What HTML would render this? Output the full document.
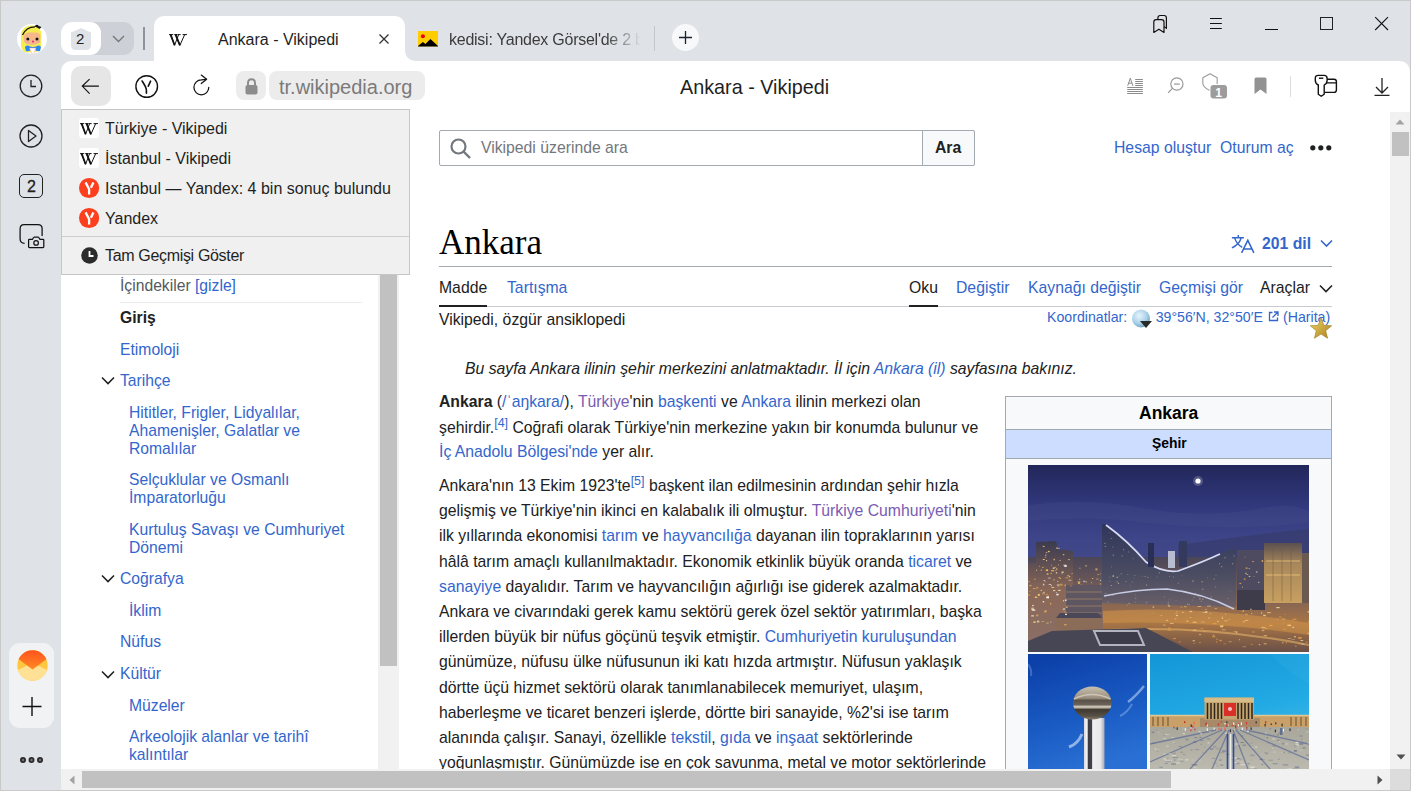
<!DOCTYPE html>
<html><head><meta charset="utf-8">
<style>
*{box-sizing:border-box;margin:0;padding:0}
html,body{width:1411px;height:791px;overflow:hidden;background:#dfe2e7;font-family:"Liberation Sans",sans-serif}
.a{position:absolute}
.t{position:absolute;white-space:nowrap;line-height:1}
#frame{position:absolute;left:0;top:0;width:1411px;height:791px;border:1px solid #c9c9c9;pointer-events:none;z-index:50}
svg{position:absolute;overflow:visible}
.wp{font-size:15.76px;color:#202122}
.ui{color:#1f1f1f}
.lk{color:#3366cc}
.vs{color:#795cb2}
</style></head><body>
<div id="frame"></div>

<!-- ===== TAB STRIP ===== -->
<!-- avatar -->
<div class="a" style="left:17px;top:24px;width:30px;height:30px;border-radius:50%;background:#fff;overflow:hidden">
 <svg width="30" height="30" style="left:0;top:0">
  <path d="M4 14 Q3 2 15 1.5 Q25 2 24.5 13 L24 24 Q22 28 18 28 L8 28.5 Q4 26 4 20Z" fill="#f4ec50"/>
  <path d="M6.5 13 Q7 8.5 12 8.5 L20 8.5 Q23.5 9 23.3 13 L23 17 Q21 21 15 21 Q8.5 21 7 17Z" fill="#f6b88a"/>
  <path d="M6 12 Q9 4 16 3.5 Q21 4 23.5 10 Q18 6.5 12 7.5 Q8 8.5 6 12Z" fill="#f4ec50"/>
  <path d="M5.5 11 Q9 3 18 2.8" stroke="#151515" stroke-width="1.3" fill="none"/>
  <path d="M18 2.5 L20.5 0.8 L21.5 3 L24 2.8 L22 4.5" stroke="#151515" stroke-width="1.3" fill="#151515"/>
  <circle cx="10.8" cy="15" r="1.5" fill="#111"/><circle cx="20" cy="15" r="1.5" fill="#111"/>
  <circle cx="9.5" cy="17.5" r="1.6" fill="#f59ab0" opacity="0.7"/><circle cx="21.5" cy="17.5" r="1.6" fill="#f59ab0" opacity="0.7"/>
  <circle cx="16" cy="17.6" r="1.1" fill="#e8357a"/>
  <path d="M8 23 Q10 20.5 13 22.5 L16 23 L19 22.5 Q22 20.5 24 23 L23 27 Q20 28 17 25 L15 25 Q12 28 9 27Z" fill="#2b86f2"/>
  <path d="M12.5 24 L19 24 L16.5 30 L15 30Z" fill="#fff" stroke="#f0a080" stroke-width="0.5"/>
 </svg>
</div>
<!-- tab group pill -->
<div class="a" style="left:61px;top:22px;width:73px;height:33px;border-radius:11px;background:#cdd0d6"></div>
<div class="a" style="left:61px;top:22px;width:40px;height:33px;border-radius:11px;background:#fff"></div>
<svg class="a" style="left:70px;top:27px" width="22" height="24"><path d="M11 1 L21 5.5 L21 18 Q21 23 16 23 L6 23 Q1 23 1 18 L1 5.5 Z" fill="#dfe2e7"/></svg>
<div class="t" style="left:76px;top:31px;font-size:15px;color:#222">2</div>
<svg class="a" style="left:112px;top:35px" width="13" height="8"><path d="M1 1 L6.5 6.5 L12 1" stroke="#777" stroke-width="1.4" fill="none"/></svg>
<div class="a" style="left:143px;top:27px;width:2px;height:23px;background:#8f949b"></div>

<!-- active tab -->
<div class="a" style="left:154px;top:16px;width:251px;height:50px;border-radius:10px 10px 0 0;background:#fff"></div>
<div class="a" style="left:405px;top:51px;width:10px;height:10px;background:#fff"></div>
<div class="a" style="left:405px;top:41px;width:20px;height:20px;border-radius:0 0 0 10px;background:#dfe2e7"></div>
<svg class="a" style="left:169px;top:34px" width="18" height="11.6" viewBox="0 0 18 11.6"><path d="M1.6 0.6 L5.6 11.3 M5.6 11.3 L9.6 0.6 M6.6 0.6 L10.9 11.3 M10.9 11.3 L15.7 0.6" stroke="#111" fill="none" stroke-width="1"/><path d="M1.6 0.6 L5.6 11.3 M6.6 0.6 L10.9 11.3" stroke="#111" fill="none" stroke-width="1.8"/><path d="M0 0.6 H4.2 M5.2 0.6 H8.2 M8.4 0.6 H11.6 M13.6 0.6 H18" stroke="#111" stroke-width="1"/></svg>
<div class="t ui" style="left:218px;top:32px;font-size:16px">Ankara - Vikipedi</div>
<svg class="a" style="left:379px;top:34px" width="10" height="10"><path d="M0.5 0.5 L9.5 9.5 M9.5 0.5 L0.5 9.5" stroke="#333" stroke-width="1.3"/></svg>

<!-- second tab -->
<svg class="a" style="left:418px;top:31px" width="20" height="16"><rect width="20" height="15.4" fill="#ffcc00"/><path d="M0 15 L4.9 10.9 L7.4 12.9 L12.4 8 L20 15 L20 15.4 L0 15.4Z" fill="#000"/><circle cx="4.9" cy="5.3" r="2" fill="#e8000c"/></svg>
<div class="t" style="left:449px;top:32px;font-size:16px;color:#3c3c3c;width:196px;overflow:hidden;letter-spacing:-0.25px;-webkit-mask-image:linear-gradient(90deg,#000 80%,transparent 98%)">kedisi: Yandex Görsel'de 2 bin</div>
<div class="a" style="left:654px;top:26px;width:1px;height:25px;background:#c3c7cd"></div>
<div class="a" style="left:672px;top:24px;width:27px;height:27px;border-radius:50%;background:#f7f8f9"></div>
<svg class="a" style="left:679px;top:31px" width="13" height="13"><path d="M6.5 0 V13 M0 6.5 H13" stroke="#1a2230" stroke-width="1.3"/></svg>

<!-- right chrome icons -->
<svg class="a" style="left:1152px;top:14px" width="18" height="20"><path d="M5.9 5.7 V3.8 Q5.9 1.5 8.2 1.5 H12.1 Q14.4 1.5 14.4 3.8 V14.2 L12.1 12.8" stroke="#111" stroke-width="1.2" fill="none"/><path d="M1.8 18.4 V8 Q1.8 5.7 4.1 5.7 H9.7 Q12 5.7 12 8 V18.4 L6.9 15.2 Z" stroke="#111" stroke-width="1.2" fill="none" stroke-linejoin="round"/></svg>
<svg class="a" style="left:1209px;top:17px" width="14" height="13"><path d="M1 1.5 H12.8 M1 6.5 H12.8 M1 11.5 H12.8" stroke="#111" stroke-width="1.1"/></svg>
<div class="a" style="left:1265px;top:29px;width:13px;height:1px;background:#111"></div>
<div class="a" style="left:1320px;top:17px;width:13px;height:13px;border:1.3px solid #222"></div>
<svg class="a" style="left:1375px;top:17px" width="14" height="14"><path d="M0.2 0.2 L13 13 M13 0.2 L0.2 13" stroke="#111" stroke-width="1.1"/></svg>

<!-- ===== LEFT SIDEBAR ===== -->
<svg class="a" style="left:19px;top:74px" width="24" height="24"><circle cx="12" cy="12" r="10.8" stroke="#222" stroke-width="1.3" fill="none"/><path d="M12 6 V12.5 H17" stroke="#222" stroke-width="1.3" fill="none"/></svg>
<svg class="a" style="left:19px;top:124px" width="24" height="24"><circle cx="12" cy="12" r="11" stroke="#222" stroke-width="1.3" fill="none"/><path d="M9.5 6.5 L17 12 L9.5 17.5 Z" stroke="#222" stroke-width="1.3" fill="none" stroke-linejoin="round"/></svg>
<div class="a" style="left:19px;top:174px;width:24px;height:24px;border:1.3px solid #222;border-radius:5px"></div>
<div class="t" style="left:27px;top:179px;font-size:16px;color:#222;-webkit-text-stroke:0.3px #222">2</div>
<svg class="a" style="left:19px;top:224px" width="26" height="25"><path d="M5.6 19.3 Q1.1 19.3 1.1 14.8 V5 Q1.1 0.6 5 0.6 H19 Q23.1 0.6 23.1 4.6 V12" stroke="#111" stroke-width="1.25" fill="none"/><path d="M10.4 15.3 Q9.6 15.3 9.6 16.1 V22.8 Q9.6 23.6 10.4 23.6 H24 Q24.8 23.6 24.8 22.8 V16.1 Q24.8 15.3 24 15.3 H21 L19.8 13.5 Q19.5 13 19 13 H15.4 Q14.9 13 14.6 13.5 L13.4 15.3 Z" stroke="#111" stroke-width="1.25" fill="none" stroke-linejoin="round"/><circle cx="17.1" cy="18.9" r="2.3" stroke="#111" stroke-width="1.2" fill="none"/></svg>

<div class="a" style="left:9px;top:643px;width:45px;height:85px;border-radius:11px;background:#f1f2f4"></div>
<svg class="a" style="left:17px;top:650px" width="31" height="31"><defs><linearGradient id="mg" x1="0" y1="0" x2="0" y2="1"><stop offset="0" stop-color="#ff4d1c"/><stop offset="1" stop-color="#ff8a24"/></linearGradient><clipPath id="mc"><circle cx="15.5" cy="15.5" r="15.2"/></clipPath></defs><g clip-path="url(#mc)"><rect width="31" height="31" fill="#ffc640"/><path d="M-2 21.5 L15.5 12.8 L33 21.5 L33 33 L-2 33Z" fill="#ffe196"/><path d="M-2 6.5 L15.5 19.5 L33 6.5 L33 -2 L-2 -2Z" fill="url(#mg)"/></g></svg>
<svg class="a" style="left:22px;top:697px" width="20" height="20"><path d="M10 0 V19 M0.5 9.5 H19.5" stroke="#111" stroke-width="1.4"/></svg>
<svg class="a" style="left:20px;top:757px" width="23" height="6"><circle cx="3" cy="3" r="2.1" stroke="#2a2a2a" stroke-width="1.8" fill="#777"/><circle cx="11.5" cy="3" r="2.1" stroke="#2a2a2a" stroke-width="1.8" fill="#777"/><circle cx="20" cy="3" r="2.1" stroke="#2a2a2a" stroke-width="1.8" fill="#777"/></svg>

<!-- ===== TOOLBAR ===== -->
<div class="a" style="left:61px;top:61px;width:1349px;height:51px;background:#fff;border-radius:10px 10px 0 0"></div>
<div class="a" style="left:154px;top:55px;width:251px;height:10px;background:#fff"></div>
<div class="a" style="left:71px;top:66px;width:40px;height:40px;border-radius:10px;background:#e6e6e6"></div>
<svg class="a" style="left:81px;top:79px" width="19" height="16"><path d="M17.9 7.1 H1.3 M8.6 0.1 L1.3 7.1 L8.6 14.7" stroke="#111" stroke-width="1.15" fill="none"/></svg>
<svg class="a" style="left:135px;top:75px" width="24" height="24"><circle cx="11.7" cy="11.5" r="10.8" stroke="#111" stroke-width="1.4" fill="none"/><path d="M7.1 6 Q11.4 12.5 11.4 15 V18.2 M15.6 6.2 L13.3 11.2" stroke="#111" stroke-width="1.6" fill="none" stroke-linecap="round"/></svg>
<svg class="a" style="left:192px;top:74px" width="19" height="22"><path d="M16.8 13.35 A7.45 7.45 0 1 1 9.35 5.9 L14.4 5.4" stroke="#111" stroke-width="1.25" fill="none" stroke-linecap="round"/><path d="M9.3 1.1 L14.6 5.3 L9.3 9.5" stroke="#111" stroke-width="1.25" fill="none" stroke-linecap="round" stroke-linejoin="round"/></svg>
<div class="a" style="left:236px;top:71px;width:30px;height:29px;border-radius:8px;background:#ececec"></div>
<svg class="a" style="left:245px;top:78px" width="13" height="17"><path d="M3 7.5 V5 Q3 1.3 6.5 1.3 Q10 1.3 10 5 V7.5" stroke="#8c8c8c" stroke-width="2" fill="none"/><rect x="0.5" y="7" width="12" height="9.5" rx="2" fill="#8c8c8c"/></svg>
<div class="a" style="left:269px;top:71px;width:156px;height:29px;border-radius:8px;background:#ececec"></div>
<div class="t" style="left:279px;top:77px;font-size:20px;color:#7a7a7a">tr.wikipedia.org</div>
<div class="t" style="left:680px;top:78px;font-size:19.8px;color:#1f1f1f">Ankara - Vikipedi</div>

<!-- right toolbar icons -->
<svg class="a" style="left:1127px;top:77px" width="17" height="18"><path d="M0.7 8.8 L3.3 1.2 L5.9 8.8 M1.7 6.2 H4.9" stroke="#8c8c8c" stroke-width="1" fill="none"/><path d="M8.2 2.5 H15.9 M8.2 4.5 H15.9 M8.2 6.5 H15.9 M8.2 8.5 H15.9 M0.2 10.5 H15.9 M0.2 12.5 H15.9 M0.2 14.5 H15.9 M0.2 16.5 H15.9" stroke="#8c8c8c" stroke-width="1"/></svg>
<svg class="a" style="left:1167px;top:77px" width="18" height="17"><circle cx="9.9" cy="7" r="6.1" stroke="#999" stroke-width="1.2" fill="none"/><path d="M7 7.1 H12.8" stroke="#999" stroke-width="1.2"/><path d="M5.4 11.3 L1.1 15.9" stroke="#999" stroke-width="1.2"/></svg>
<svg class="a" style="left:1201px;top:73px" width="28" height="27"><path d="M9 0.7 L16.2 4.8 V10 Q16.2 14.5 9 17.5 Q1.8 14.5 1.8 10 V4.8 Z" stroke="#9a9a9a" stroke-width="1.1" fill="none" stroke-linejoin="round"/><rect x="8.5" y="11" width="18" height="15" rx="3.5" fill="#fff"/><rect x="9.5" y="12" width="16.5" height="13.5" rx="3" fill="#9c9c9c"/><text x="14.3" y="23.6" font-family="Liberation Sans" font-weight="700" font-size="12" fill="#fff">1</text></svg>
<svg class="a" style="left:1254px;top:77px" width="13" height="18"><path d="M0.5 2 Q0.5 0.5 2 0.5 H11 Q12.5 0.5 12.5 2 V17 L6.5 12.5 L0.5 17Z" fill="#929292"/></svg>
<div class="a" style="left:1290px;top:76px;width:1px;height:21px;background:#dcdcdc"></div>
<svg class="a" style="left:1314px;top:74px" width="24" height="24"><path d="M10.5 5.2 H20 Q22.4 5.2 22.4 7.6 V16 Q22.4 18.4 20 18.4 H10.5 M10.5 8.9 H22.4" stroke="#111" stroke-width="1.4" fill="none"/><path d="M1.3 4.2 Q1.3 1.4 4.3 1.4 H10 Q13.1 1.4 13.1 4.2 V6.5 Q13.1 9.5 10.2 11 V20.2 L7.2 22.3 L4.3 20.2 V11 Q1.3 9.5 1.3 6.5 Z" stroke="#111" stroke-width="1.4" fill="#fff" stroke-linejoin="round"/><path d="M4.9 4.2 H9.3" stroke="#111" stroke-width="1.4"/></svg>
<svg class="a" style="left:1374px;top:77px" width="16" height="19"><path d="M8 1 V16 M2 10 L8 16 L14 10 M0.5 18.3 H15.5" stroke="#222" stroke-width="1.3" fill="none"/></svg>

<!-- ===== PAGE ===== -->
<div class="a" style="left:61px;top:112px;width:1349px;height:678px;background:#fff"></div>

<!-- TOC -->
<div class="t wp" style="left:120px;top:278px;color:#54595d;font-size:15.7px">İçindekiler <span class="lk">[gizle]</span></div>
<div class="a" style="left:120px;top:302px;width:242px;height:1px;background:#eaecf0"></div>
<div class="t wp" style="left:120px;top:310px;font-weight:700;font-size:15.7px;color:#202122">Giriş</div>
<div class="t wp lk" style="left:120px;top:342px;font-size:15.7px">Etimoloji</div>
<div class="t wp lk" style="left:120px;top:373px;font-size:15.7px">Tarihçe</div>
<div class="a wp lk" style="left:129px;top:404px;font-size:15.7px;line-height:17.75px;white-space:nowrap">Hititler, Frigler, Lidyalılar,<br>Ahamenişler, Galatlar ve<br>Romalılar</div>
<div class="a wp lk" style="left:129px;top:471px;font-size:15.7px;line-height:17.75px;white-space:nowrap">Selçuklular ve Osmanlı<br>İmparatorluğu</div>
<div class="a wp lk" style="left:129px;top:521px;font-size:15.7px;line-height:17.75px;white-space:nowrap">Kurtuluş Savaşı ve Cumhuriyet<br>Dönemi</div>
<div class="t wp lk" style="left:120px;top:571px;font-size:15.7px">Coğrafya</div>
<div class="t wp lk" style="left:129px;top:603px;font-size:15.7px">İklim</div>
<div class="t wp lk" style="left:120px;top:634px;font-size:15.7px">Nüfus</div>
<div class="t wp lk" style="left:120px;top:666px;font-size:15.7px">Kültür</div>
<div class="t wp lk" style="left:129px;top:698px;font-size:15.7px">Müzeler</div>
<div class="a wp lk" style="left:129px;top:728px;font-size:15.7px;line-height:17.75px;white-space:nowrap">Arkeolojik alanlar ve tarihî<br>kalıntılar</div>
<svg class="a" style="left:101px;top:376px" width="14" height="10"><path d="M1 1.5 L7 7.5 L13 1.5" stroke="#202122" stroke-width="1.6" fill="none"/></svg>
<svg class="a" style="left:101px;top:574px" width="14" height="10"><path d="M1 1.5 L7 7.5 L13 1.5" stroke="#202122" stroke-width="1.6" fill="none"/></svg>
<svg class="a" style="left:101px;top:670px" width="14" height="10"><path d="M1 1.5 L7 7.5 L13 1.5" stroke="#202122" stroke-width="1.6" fill="none"/></svg>
<!-- TOC scrollbar -->
<div class="a" style="left:378px;top:112px;width:21px;height:657px;background:#f1f1f1"></div>
<div class="a" style="left:380px;top:112px;width:17px;height:554px;background:#c1c1c1"></div>

<!-- search -->
<div class="a" style="left:439px;top:130px;width:536px;height:36px;border:1px solid #a2a9b1;border-radius:2px;background:#fff"></div>
<div class="a" style="left:922px;top:130px;width:53px;height:36px;border:1px solid #a2a9b1;border-radius:0 2px 2px 0;background:#f8f9fa"></div>
<svg class="a" style="left:450px;top:138px" width="22" height="22"><circle cx="8.5" cy="8.5" r="7" stroke="#72777d" stroke-width="2.2" fill="none"/><path d="M13.5 13.5 L20 20" stroke="#72777d" stroke-width="2.4"/></svg>
<div class="t wp" style="left:481px;top:140px;color:#72777d">Vikipedi üzerinde ara</div>
<div class="t wp" style="left:935px;top:140px;font-weight:700;color:#202122">Ara</div>
<div class="t wp lk" style="left:1114px;top:140px">Hesap oluştur</div>
<div class="t wp lk" style="left:1220px;top:140px">Oturum aç</div>
<svg class="a" style="left:1310px;top:145px" width="22" height="6"><circle cx="2.8" cy="2.8" r="2.6" fill="#202122"/><circle cx="10.8" cy="2.8" r="2.6" fill="#202122"/><circle cx="18.8" cy="2.8" r="2.6" fill="#202122"/></svg>

<!-- heading -->
<div class="t" style="left:439px;top:225px;font-family:'Liberation Serif',serif;font-size:35px;color:#000">Ankara</div>
<div class="a" style="left:439px;top:266px;width:893px;height:1px;background:#a2a9b1"></div>
<svg class="a" style="left:1231px;top:234px" width="24" height="20"><path d="M7.3 1 V3.4 M0.9 3.7 H12.9 M3.6 3.9 Q5.6 10.2 11.2 13.4 M10.2 3.9 Q8 10.6 0.9 13.8" stroke="#3366cc" stroke-width="1.45" fill="none"/><path d="M10.6 18.9 L16.8 6.3 L22.9 18.9 M12.6 14.9 H21" stroke="#3366cc" stroke-width="1.5" fill="none"/></svg>
<div class="t wp lk" style="left:1262px;top:236px;font-weight:700">201 dil</div>
<svg class="a" style="left:1320px;top:239px" width="13" height="9"><path d="M1 1.5 L6.5 7 L12 1.5" stroke="#3366cc" stroke-width="1.6" fill="none"/></svg>

<!-- tabs -->
<div class="t wp" style="left:439px;top:280px">Madde</div>
<div class="t wp lk" style="left:507px;top:280px">Tartışma</div>
<div class="t wp" style="left:909px;top:280px">Oku</div>
<div class="t wp lk" style="left:956px;top:280px">Değiştir</div>
<div class="t wp lk" style="left:1028px;top:280px">Kaynağı değiştir</div>
<div class="t wp lk" style="left:1159px;top:280px">Geçmişi gör</div>
<div class="t wp" style="left:1260px;top:280px">Araçlar</div>
<svg class="a" style="left:1319px;top:284px" width="14" height="9"><path d="M1 1.5 L7 7.5 L13 1.5" stroke="#202122" stroke-width="1.6" fill="none"/></svg>
<div class="a" style="left:439px;top:306px;width:893px;height:1px;background:#c8ccd1"></div>
<div class="a" style="left:439px;top:305px;width:48px;height:2px;background:#202122"></div>
<div class="a" style="left:909px;top:305px;width:29px;height:2px;background:#202122"></div>
<div class="t wp" style="left:439px;top:312px">Vikipedi, özgür ansiklopedi</div>

<!-- coordinates -->
<div class="t lk" style="left:1047px;top:310px;font-size:14.16px">Koordinatlar:</div>
<svg class="a" style="left:1131px;top:309px" width="22" height="20"><defs><radialGradient id="gl" cx="0.4" cy="0.35" r="0.7"><stop offset="0" stop-color="#e8f4fb"/><stop offset="0.6" stop-color="#a9d2ea"/><stop offset="1" stop-color="#6a9dbd"/></radialGradient></defs><circle cx="10" cy="9.5" r="9" fill="url(#gl)"/><path d="M9 12 H21 L15 19Z" fill="#2a2a2a"/></svg>
<div class="t lk" style="left:1155.7px;top:310px;font-size:14.16px">39°56′N, 32°50′E</div>
<svg class="a" style="left:1268px;top:311px" width="11" height="11"><path d="M4.5 1.5 H1.5 V9.5 H9.5 V6.5 M6 1 H10 V5 M10 1 L4.5 6.5" stroke="#3366cc" stroke-width="1.3" fill="none"/></svg>
<div class="t lk" style="left:1283px;top:310px;font-size:14.16px">(Harita)</div>
<svg class="a" style="left:1309px;top:317px" width="24" height="22"><defs><linearGradient id="st" x1="0" y1="0" x2="1" y2="1"><stop offset="0" stop-color="#f3d56a"/><stop offset="1" stop-color="#a6801d"/></linearGradient></defs><path d="M12 1 L14.9 8.3 L22.7 8.8 L16.7 13.7 L18.6 21.3 L12 17.1 L5.4 21.3 L7.3 13.7 L1.3 8.8 L9.1 8.3Z" fill="url(#st)" stroke="#9a7a20" stroke-width="0.6"/></svg>

<!-- hatnote -->
<div class="t wp" style="left:465px;top:361px;font-style:italic">Bu sayfa Ankara ilinin şehir merkezini anlatmaktadır. İl için <span class="lk">Ankara (il)</span> sayfasına bakınız.</div>

<!-- paragraphs -->
<div class="t wp" style="left:439px;top:394px"><b>Ankara</b> (<span class="lk">/ˈaŋkara/</span>), <span class="vs">Türkiye</span>'nin <span class="lk">başkenti</span> ve <span class="lk">Ankara</span> ilinin merkezi olan</div>
<div class="t wp" style="left:439px;top:420px">şehirdir.<sup class="lk" style="font-size:12.5px;line-height:0">[4]</sup> Coğrafi olarak Türkiye'nin merkezine yakın bir konumda bulunur ve</div>
<div class="t wp" style="left:439px;top:444px"><span class="lk">İç Anadolu Bölgesi'nde</span> yer alır.</div>
<div class="a wp" style="left:439px;top:473px;line-height:25.2px;white-space:nowrap">Ankara'nın 13 Ekim 1923'te<sup class="lk" style="font-size:12.5px;line-height:0">[5]</sup> başkent ilan edilmesinin ardından şehir hızla<br>gelişmiş ve Türkiye'nin ikinci en kalabalık ili olmuştur. <span class="vs">Türkiye Cumhuriyeti</span>'nin<br>ilk yıllarında ekonomisi <span class="lk">tarım</span> ve <span class="lk">hayvancılığa</span> dayanan ilin topraklarının yarısı<br>hâlâ tarım amaçlı kullanılmaktadır. Ekonomik etkinlik büyük oranda <span class="lk">ticaret</span> ve<br><span class="lk">sanayiye</span> dayalıdır. Tarım ve hayvancılığın ağırlığı ise giderek azalmaktadır.<br>Ankara ve civarındaki gerek kamu sektörü gerek özel sektör yatırımları, başka<br>illerden büyük bir nüfus göçünü teşvik etmiştir. <span class="lk">Cumhuriyetin kuruluşundan</span><br>günümüze, nüfusu ülke nüfusunun iki katı hızda artmıştır. Nüfusun yaklaşık<br>dörtte üçü hizmet sektörü olarak tanımlanabilecek memuriyet, ulaşım,<br>haberleşme ve ticaret benzeri işlerde, dörtte biri sanayide, %2'si ise tarım<br>alanında çalışır. Sanayi, özellikle <span class="lk">tekstil</span>, <span class="lk">gıda</span> ve <span class="lk">inşaat</span> sektörlerinde<br>yoğunlaşmıştır. Günümüzde ise en çok savunma, metal ve motor sektörlerinde</div>

<!-- infobox -->
<div class="a" style="left:1005px;top:396px;width:327px;height:400px;border:1px solid #a2a9b1;background:#f8f9fa"></div>
<div class="a" style="left:1006px;top:429px;width:325px;height:1px;background:#a2a9b1"></div>
<div class="a" style="left:1006px;top:430px;width:325px;height:28px;background:#ccddff"></div>
<div class="a" style="left:1006px;top:458px;width:325px;height:1px;background:#a2a9b1"></div>
<div class="t" style="left:1139px;top:405px;font-size:17.5px;font-weight:700;color:#000">Ankara</div>
<div class="t" style="left:1152px;top:437px;font-size:13.9px;font-weight:700;color:#000">Şehir</div>
<div class="a" style="left:1028px;top:465px;width:281px;height:187px;overflow:hidden"><svg class="a" style="left:0;top:0" width="281" height="187" viewBox="0 0 281 187">
 <defs>
  <linearGradient id="sky1" x1="0" y1="0" x2="0" y2="1"><stop offset="0" stop-color="#22275a"/><stop offset="0.2" stop-color="#30377a"/><stop offset="0.4" stop-color="#3e4588"/><stop offset="0.55" stop-color="#444a88"/></linearGradient>
  <linearGradient id="wave" x1="0" y1="0" x2="0" y2="1"><stop offset="0" stop-color="#30365a"/><stop offset="0.6" stop-color="#4a4c62"/><stop offset="1" stop-color="#6a6068"/></linearGradient>
  <linearGradient id="gold" x1="0" y1="0" x2="0" y2="1"><stop offset="0" stop-color="#5a5050"/><stop offset="0.35" stop-color="#a8875a"/><stop offset="1" stop-color="#c8a060"/></linearGradient>
  <linearGradient id="road" x1="0" y1="0" x2="0" y2="1"><stop offset="0" stop-color="#4a4658"/><stop offset="0.4" stop-color="#7a6058"/><stop offset="0.7" stop-color="#a87545"/><stop offset="1" stop-color="#6a5048"/></linearGradient>
  <linearGradient id="lcity" x1="0" y1="0" x2="0" y2="1"><stop offset="0" stop-color="#3a3a50"/><stop offset="0.45" stop-color="#8a6858"/><stop offset="1" stop-color="#8a7068"/></linearGradient>
 </defs>
 <rect width="281" height="187" fill="url(#sky1)"/>
 <path d="M0 40 Q60 32 120 44 Q180 54 240 42 Q265 38 281 46 L281 58 Q200 66 120 58 Q60 50 0 56Z" fill="#5a5f98" opacity="0.18"/>
 <path d="M150 80 Q220 70 281 64 L281 92 L150 92Z" fill="#363b68" opacity="0.6"/>
 <circle cx="170" cy="16" r="2.6" fill="#fff"/><circle cx="170" cy="16" r="5" fill="#fff" opacity="0.2"/>
 <rect x="0" y="92" width="281" height="95" fill="url(#road)"/>
 <path d="M0 98 L8 98 L8 77 L28 76 L30 84 L45 86 L45 122 L75 124 L75 187 L0 187Z" fill="url(#lcity)"/>
 <path d="M74 59 L78 59 Q100 76 118 97 Q135 108 150 105 Q175 96 201 85 L208 83 L208 142 L74 138Z" fill="url(#wave)"/>
 <path d="M78 60 Q100 76 118 97 Q135 108 150 106 Q175 97 192 89" stroke="#d8dcf4" stroke-width="1.7" fill="none"/>
 <path d="M76 131 Q110 124 139 124 Q175 128 206 144" stroke="#c8cce4" stroke-width="1.5" fill="none"/>
 <rect x="120" y="78" width="6" height="24" fill="#2a3055"/><rect x="140" y="86" width="7" height="17" fill="#b8bcd0"/><rect x="151" y="76" width="8" height="26" fill="#343a5e"/>
 <rect x="209" y="85" width="27" height="42" fill="#4e4a60"/>
 <rect x="209" y="125" width="28" height="20" fill="#3e3c4a"/>
 <rect x="236" y="78" width="38" height="60" fill="url(#gold)"/>
 <path d="M238 96 h34 M238 110 h34" stroke="#f0c878" stroke-width="1.4" opacity="0.55"/>
 <path d="M245 80 v56 M254 80 v56 M263 80 v56" stroke="#6a5a48" stroke-width="0.8" opacity="0.6"/>
 <rect x="274" y="88" width="7" height="50" fill="#6a5a50"/>
 <rect x="38" y="120" width="36" height="34" fill="#5e5660"/>
 <path d="M38 127 h36 M38 134 h36 M38 141 h36 M38 148 h36" stroke="#a88868" stroke-width="1" opacity="0.7"/>
 <rect x="28" y="153" width="46" height="17" fill="#8a6c58"/>
 <path d="M28 153 L74 153 L70 148 L32 148Z" fill="#4a4858"/>
 <path d="M75 146 Q170 140 281 158 L281 170 Q180 155 75 158Z" fill="#d8984a" opacity="0.5"/>
 <path d="M80 165 Q180 160 281 180" stroke="#f4c070" stroke-width="2.2" fill="none" opacity="0.5"/>
 <rect x="20.3" y="86.2" width="1.6" height="0.7" fill="#ffd27a" opacity="0.68"/>
 <rect x="11.0" y="100.8" width="0.8" height="1.0" fill="#ffd27a" opacity="0.62"/>
 <rect x="28.3" y="82.4" width="1.5" height="1.5" fill="#ffd27a" opacity="0.79"/>
 <rect x="22.9" y="120.0" width="0.9" height="1.4" fill="#fff0c0" opacity="0.71"/>
 <rect x="27.9" y="103.4" width="1.5" height="1.2" fill="#ffd27a" opacity="0.79"/>
 <rect x="31.4" y="95.3" width="1.5" height="0.7" fill="#ffd27a" opacity="0.81"/>
 <rect x="26.4" y="101.8" width="1.7" height="1.0" fill="#ffc060" opacity="0.68"/>
 <rect x="17.7" y="87.4" width="1.7" height="0.7" fill="#fff0c0" opacity="0.76"/>
 <rect x="39.6" y="109.9" width="1.1" height="1.5" fill="#ffd27a" opacity="0.76"/>
 <rect x="14.8" y="94.0" width="1.9" height="1.0" fill="#ffd27a" opacity="0.88"/>
 <rect x="29.1" y="115.9" width="1.2" height="1.2" fill="#ffc060" opacity="0.79"/>
 <rect x="25.0" y="114.4" width="1.9" height="1.0" fill="#ffd27a" opacity="0.53"/>
 <rect x="33.6" y="106.5" width="2.0" height="1.3" fill="#fff0c0" opacity="0.86"/>
 <rect x="40.0" y="94.2" width="1.9" height="0.9" fill="#ffd27a" opacity="0.75"/>
 <rect x="16.6" y="91.8" width="1.7" height="1.0" fill="#ffc060" opacity="0.54"/>
 <rect x="24.7" y="102.5" width="1.9" height="1.3" fill="#fff0c0" opacity="0.85"/>
 <rect x="43.5" y="108.0" width="1.3" height="0.8" fill="#ffd27a" opacity="0.59"/>
 <rect x="17.1" y="89.6" width="1.4" height="1.1" fill="#fff0c0" opacity="0.64"/>
 <rect x="14.1" y="101.9" width="1.5" height="0.9" fill="#ffb84a" opacity="0.85"/>
 <rect x="27.0" y="105.3" width="1.6" height="0.6" fill="#ffc060" opacity="0.70"/>
 <rect x="22.8" y="99.7" width="1.3" height="0.8" fill="#ffb84a" opacity="0.72"/>
 <rect x="12.8" y="104.6" width="0.9" height="1.1" fill="#ffd27a" opacity="0.97"/>
 <rect x="30.5" y="82.9" width="1.0" height="0.9" fill="#fff0c0" opacity="0.98"/>
 <rect x="30.1" y="99.4" width="0.9" height="1.0" fill="#ffc060" opacity="0.74"/>
 <rect x="19.9" y="85.9" width="1.7" height="1.3" fill="#ffc060" opacity="0.91"/>
 <rect x="14.7" y="80.9" width="1.9" height="1.1" fill="#ffb84a" opacity="0.85"/>
 <rect x="41.0" y="111.1" width="1.2" height="1.2" fill="#ffd27a" opacity="0.85"/>
 <rect x="18.1" y="95.0" width="1.0" height="1.3" fill="#fff0c0" opacity="0.82"/>
 <rect x="30.5" y="112.3" width="1.7" height="0.8" fill="#ffb84a" opacity="0.91"/>
 <rect x="34.9" y="89.3" width="1.4" height="0.9" fill="#ffd27a" opacity="0.99"/>
 <rect x="36.7" y="99.4" width="1.0" height="1.1" fill="#fff0c0" opacity="0.72"/>
 <rect x="41.8" y="120.5" width="1.9" height="0.9" fill="#ffb84a" opacity="0.55"/>
 <rect x="25.5" y="93.8" width="1.4" height="1.5" fill="#ffd27a" opacity="0.74"/>
 <rect x="31.9" y="112.8" width="0.9" height="1.2" fill="#ffc060" opacity="0.89"/>
 <rect x="35.3" y="99.6" width="1.0" height="1.3" fill="#fff0c0" opacity="0.54"/>
 <rect x="34.3" y="144.6" width="1.0" height="0.8" fill="#ffb84a" opacity="0.51"/>
 <rect x="69.4" y="109.4" width="2.0" height="0.6" fill="#ffd27a" opacity="0.76"/>
 <rect x="15.6" y="115.1" width="1.4" height="0.9" fill="#ffffff" opacity="0.66"/>
 <rect x="4.5" y="144.4" width="2.8" height="1.5" fill="#ffffff" opacity="0.71"/>
 <rect x="1.4" y="126.4" width="1.2" height="0.6" fill="#ffb84a" opacity="0.59"/>
 <rect x="35.0" y="143.5" width="2.0" height="1.1" fill="#ffffff" opacity="0.77"/>
 <rect x="35.7" y="146.6" width="2.7" height="0.7" fill="#ffb84a" opacity="0.64"/>
 <rect x="37.9" y="141.6" width="1.8" height="1.3" fill="#ffc060" opacity="0.75"/>
 <rect x="18.3" y="131.4" width="2.7" height="1.9" fill="#ffffff" opacity="0.95"/>
 <rect x="15.0" y="126.9" width="1.7" height="1.1" fill="#fff0c0" opacity="0.54"/>
 <rect x="17.8" y="104.4" width="2.3" height="1.7" fill="#ffb84a" opacity="0.97"/>
 <rect x="18.7" y="108.2" width="1.8" height="1.6" fill="#ffd27a" opacity="0.70"/>
 <rect x="36.1" y="159.4" width="2.6" height="0.8" fill="#ffc060" opacity="1.00"/>
 <rect x="29.9" y="125.3" width="1.6" height="0.7" fill="#fff0c0" opacity="0.51"/>
 <rect x="1.3" y="119.9" width="2.2" height="1.3" fill="#ffd27a" opacity="0.56"/>
 <rect x="68.0" y="113.7" width="2.7" height="0.7" fill="#fff0c0" opacity="0.52"/>
 <rect x="57.6" y="116.2" width="1.1" height="1.2" fill="#fff0c0" opacity="0.70"/>
 <rect x="36.6" y="119.6" width="1.4" height="1.7" fill="#ffb84a" opacity="0.71"/>
 <rect x="5.4" y="156.3" width="2.2" height="1.7" fill="#ffd27a" opacity="0.80"/>
 <rect x="16.5" y="115.9" width="1.1" height="0.6" fill="#ffffff" opacity="0.71"/>
 <rect x="3.2" y="142.6" width="2.9" height="2.0" fill="#fff0c0" opacity="0.53"/>
 <rect x="14.9" y="118.7" width="1.5" height="1.7" fill="#fff0c0" opacity="0.72"/>
 <rect x="49.7" y="116.2" width="2.6" height="2.0" fill="#ffd27a" opacity="0.51"/>
 <rect x="14.0" y="128.5" width="2.9" height="0.7" fill="#ffc060" opacity="0.83"/>
 <rect x="71.8" y="118.5" width="1.3" height="0.9" fill="#ffb84a" opacity="0.92"/>
 <rect x="29.9" y="120.9" width="0.9" height="0.8" fill="#ffd27a" opacity="0.81"/>
 <rect x="4.1" y="139.9" width="1.6" height="1.3" fill="#fff0c0" opacity="0.80"/>
 <rect x="51.3" y="102.7" width="1.2" height="1.0" fill="#ffd27a" opacity="0.63"/>
 <rect x="40.5" y="114.7" width="2.9" height="1.0" fill="#fff0c0" opacity="0.59"/>
 <rect x="24.8" y="105.0" width="1.4" height="1.5" fill="#ffb84a" opacity="0.75"/>
 <rect x="0.4" y="115.9" width="1.0" height="1.2" fill="#ffd27a" opacity="0.70"/>
 <rect x="22.2" y="137.8" width="1.0" height="1.9" fill="#ffb84a" opacity="0.83"/>
 <rect x="28.8" y="119.6" width="3.0" height="0.8" fill="#ffffff" opacity="0.82"/>
 <rect x="3.2" y="150.1" width="2.8" height="1.5" fill="#ffffff" opacity="0.57"/>
 <rect x="51.3" y="113.8" width="0.9" height="0.8" fill="#fff0c0" opacity="0.98"/>
 <rect x="27.9" y="127.1" width="0.9" height="0.6" fill="#ffffff" opacity="0.84"/>
 <rect x="36.2" y="100.2" width="2.6" height="1.6" fill="#ffffff" opacity="0.95"/>
 <rect x="6.8" y="131.6" width="2.4" height="1.3" fill="#ffd27a" opacity="0.92"/>
 <rect x="17.4" y="145.4" width="1.3" height="1.5" fill="#ffc060" opacity="0.75"/>
 <rect x="28.3" y="128.7" width="2.3" height="1.7" fill="#ffffff" opacity="0.82"/>
 <rect x="14.7" y="136.0" width="1.5" height="1.5" fill="#fff0c0" opacity="0.81"/>
 <rect x="9.9" y="128.9" width="1.9" height="2.0" fill="#ffd27a" opacity="0.85"/>
 <rect x="50.0" y="117.5" width="1.9" height="1.3" fill="#ffc060" opacity="0.88"/>
 <rect x="23.1" y="105.2" width="1.8" height="1.0" fill="#ffd27a" opacity="0.91"/>
 <rect x="19.9" y="112.6" width="2.9" height="0.9" fill="#ffffff" opacity="0.55"/>
 <rect x="55.3" y="115.7" width="1.6" height="1.4" fill="#ffffff" opacity="0.64"/>
 <rect x="8.3" y="121.9" width="1.9" height="1.8" fill="#ffc060" opacity="0.51"/>
 <rect x="0.3" y="129.5" width="1.8" height="1.0" fill="#ffb84a" opacity="0.71"/>
 <rect x="27.8" y="107.3" width="1.5" height="1.1" fill="#fff0c0" opacity="0.92"/>
 <rect x="8.9" y="155.6" width="2.4" height="1.9" fill="#fff0c0" opacity="0.63"/>
 <rect x="4.8" y="123.4" width="2.7" height="0.7" fill="#ffc060" opacity="0.88"/>
 <rect x="63.2" y="116.8" width="0.9" height="1.5" fill="#ffb84a" opacity="0.62"/>
 <rect x="19.7" y="130.7" width="1.2" height="1.1" fill="#ffc060" opacity="0.94"/>
 <rect x="3.7" y="143.9" width="1.8" height="1.7" fill="#fff0c0" opacity="0.74"/>
 <rect x="12.6" y="124.9" width="1.4" height="1.0" fill="#fff0c0" opacity="0.70"/>
 <rect x="17.7" y="129.0" width="2.3" height="0.8" fill="#ffb84a" opacity="0.54"/>
 <rect x="37.0" y="148.7" width="2.0" height="1.2" fill="#fff0c0" opacity="1.00"/>
 <rect x="33.3" y="108.4" width="1.2" height="0.7" fill="#fff0c0" opacity="0.78"/>
 <rect x="23.6" y="122.1" width="2.6" height="0.9" fill="#ffd27a" opacity="0.87"/>
 <rect x="30.5" y="124.8" width="2.0" height="1.1" fill="#fff0c0" opacity="0.88"/>
 <rect x="36.9" y="134.5" width="1.6" height="1.6" fill="#ffffff" opacity="0.81"/>
 <rect x="63.9" y="113.0" width="1.4" height="0.9" fill="#ffc060" opacity="0.82"/>
 <rect x="32.0" y="118.7" width="2.6" height="2.0" fill="#ffb84a" opacity="0.52"/>
 <rect x="35.0" y="135.2" width="0.8" height="1.1" fill="#ffffff" opacity="0.93"/>
 <rect x="71.9" y="114.9" width="1.0" height="0.8" fill="#ffffff" opacity="0.99"/>
 <rect x="8.1" y="149.5" width="2.3" height="1.8" fill="#ffc060" opacity="0.54"/>
 <rect x="57.5" y="100.1" width="1.1" height="1.4" fill="#ffd27a" opacity="0.82"/>
 <rect x="22.5" y="107.7" width="1.4" height="1.5" fill="#ffd27a" opacity="0.55"/>
 <rect x="22.2" y="156.6" width="1.2" height="1.0" fill="#ffffff" opacity="0.50"/>
 <rect x="20.6" y="119.0" width="2.6" height="0.9" fill="#ffffff" opacity="0.62"/>
 <rect x="18.3" y="157.6" width="2.4" height="1.0" fill="#ffd27a" opacity="0.60"/>
 <rect x="6.0" y="113.7" width="1.7" height="1.1" fill="#ffc060" opacity="0.52"/>
 <rect x="25.0" y="125.2" width="2.3" height="0.9" fill="#fff0c0" opacity="0.87"/>
 <rect x="37.4" y="112.3" width="2.9" height="1.0" fill="#ffb84a" opacity="0.62"/>
 <rect x="16.4" y="145.6" width="1.4" height="1.9" fill="#ffc060" opacity="0.81"/>
 <rect x="67.4" y="103.4" width="2.1" height="1.9" fill="#ffd27a" opacity="0.61"/>
 <rect x="72.1" y="108.5" width="0.9" height="0.7" fill="#ffc060" opacity="0.72"/>
 <rect x="52.7" y="118.9" width="1.0" height="0.7" fill="#ffb84a" opacity="0.66"/>
 <rect x="13.7" y="156.2" width="2.4" height="0.6" fill="#ffc060" opacity="0.92"/>
 <rect x="8.1" y="104.7" width="1.0" height="1.2" fill="#ffd27a" opacity="0.78"/>
 <rect x="118.0" y="119.5" width="1.1" height="1.0" fill="#c8c0a0" opacity="0.67"/>
 <rect x="80.5" y="66.9" width="1.4" height="0.8" fill="#a0a8c8" opacity="0.33"/>
 <rect x="119.5" y="136.4" width="0.8" height="1.0" fill="#a0a8c8" opacity="0.44"/>
 <rect x="174.2" y="133.5" width="1.2" height="1.2" fill="#c8c0a0" opacity="0.67"/>
 <rect x="89.9" y="117.8" width="1.1" height="1.1" fill="#e0d0a0" opacity="0.71"/>
 <rect x="106.7" y="129.2" width="1.1" height="1.1" fill="#a0a8c8" opacity="0.34"/>
 <rect x="101.7" y="120.7" width="1.0" height="0.6" fill="#c8c0a0" opacity="0.52"/>
 <rect x="85.4" y="110.7" width="0.9" height="0.9" fill="#a0a8c8" opacity="0.74"/>
 <rect x="135.9" y="131.5" width="1.0" height="0.9" fill="#a0a8c8" opacity="0.64"/>
 <rect x="84.4" y="81.6" width="1.0" height="0.9" fill="#a0a8c8" opacity="0.66"/>
 <rect x="160.9" y="139.3" width="0.9" height="0.9" fill="#c8c0a0" opacity="0.68"/>
 <rect x="100.6" y="137.9" width="1.2" height="1.2" fill="#e0d0a0" opacity="0.53"/>
 <rect x="99.1" y="109.0" width="1.3" height="1.0" fill="#c8c0a0" opacity="0.35"/>
 <rect x="153.5" y="110.4" width="1.0" height="0.8" fill="#c8c0a0" opacity="0.32"/>
 <rect x="171.2" y="133.3" width="1.4" height="1.1" fill="#e0d0a0" opacity="0.61"/>
 <rect x="100.1" y="86.4" width="0.9" height="1.1" fill="#a0a8c8" opacity="0.52"/>
 <rect x="129.1" y="124.1" width="1.3" height="0.7" fill="#a0a8c8" opacity="0.34"/>
 <rect x="97.3" y="116.2" width="1.1" height="0.8" fill="#e0d0a0" opacity="0.49"/>
 <rect x="82.7" y="120.1" width="1.4" height="0.8" fill="#c8c0a0" opacity="0.69"/>
 <rect x="205.6" y="90.4" width="0.9" height="1.0" fill="#c8c0a0" opacity="0.72"/>
 <rect x="82.7" y="73.1" width="1.4" height="0.8" fill="#a0a8c8" opacity="0.58"/>
 <rect x="95.0" y="84.1" width="1.2" height="1.2" fill="#c8c0a0" opacity="0.47"/>
 <rect x="174.0" y="123.8" width="1.4" height="0.8" fill="#c8c0a0" opacity="0.74"/>
 <rect x="196.4" y="92.3" width="1.4" height="1.0" fill="#c8c0a0" opacity="0.59"/>
 <rect x="187.4" y="110.4" width="1.2" height="0.7" fill="#e0d0a0" opacity="0.38"/>
 <rect x="104.4" y="93.2" width="1.2" height="0.8" fill="#c8c0a0" opacity="0.37"/>
 <rect x="202.2" y="125.6" width="0.9" height="1.1" fill="#a0a8c8" opacity="0.32"/>
 <rect x="130.6" y="107.4" width="1.1" height="1.0" fill="#e0d0a0" opacity="0.53"/>
 <rect x="204.2" y="98.3" width="1.1" height="1.0" fill="#e0d0a0" opacity="0.68"/>
 <rect x="84.7" y="90.0" width="1.1" height="1.1" fill="#a0a8c8" opacity="0.53"/>
 <rect x="81.3" y="111.6" width="0.9" height="1.0" fill="#a0a8c8" opacity="0.53"/>
 <rect x="83.1" y="101.3" width="1.1" height="1.2" fill="#c8c0a0" opacity="0.31"/>
 <rect x="84.6" y="109.9" width="1.3" height="0.7" fill="#c8c0a0" opacity="0.74"/>
 <rect x="139.9" y="136.6" width="1.4" height="0.7" fill="#a0a8c8" opacity="0.72"/>
 <rect x="84.5" y="89.4" width="1.3" height="0.7" fill="#a0a8c8" opacity="0.42"/>
 <rect x="141.3" y="133.8" width="0.9" height="0.8" fill="#a0a8c8" opacity="0.41"/>
 <rect x="128.5" y="111.7" width="1.0" height="0.8" fill="#e0d0a0" opacity="0.38"/>
 <rect x="145.0" y="111.6" width="1.1" height="1.1" fill="#a0a8c8" opacity="0.53"/>
 <rect x="165.5" y="131.9" width="1.0" height="0.9" fill="#e0d0a0" opacity="0.63"/>
 <rect x="105.9" y="110.0" width="1.5" height="0.8" fill="#a0a8c8" opacity="0.41"/>
 <rect x="159.1" y="138.8" width="1.2" height="1.0" fill="#e0d0a0" opacity="0.63"/>
 <rect x="113.8" y="110.8" width="1.1" height="0.8" fill="#c8c0a0" opacity="0.36"/>
 <rect x="105.5" y="112.9" width="0.8" height="0.6" fill="#e0d0a0" opacity="0.44"/>
 <rect x="93.4" y="90.6" width="1.4" height="0.7" fill="#c8c0a0" opacity="0.72"/>
 <rect x="88.5" y="111.8" width="1.4" height="1.1" fill="#e0d0a0" opacity="0.67"/>
 <rect x="182.7" y="131.6" width="1.2" height="0.9" fill="#a0a8c8" opacity="0.72"/>
 <rect x="147.6" y="135.4" width="0.9" height="0.7" fill="#a0a8c8" opacity="0.59"/>
 <rect x="84.3" y="110.8" width="1.5" height="1.0" fill="#e0d0a0" opacity="0.62"/>
 <rect x="76.8" y="127.9" width="1.3" height="0.9" fill="#a0a8c8" opacity="0.59"/>
 <rect x="98.8" y="139.7" width="1.0" height="1.0" fill="#c8c0a0" opacity="0.45"/>
 <rect x="173.5" y="116.2" width="1.4" height="1.0" fill="#e0d0a0" opacity="0.59"/>
 <rect x="164.3" y="115.5" width="1.4" height="1.2" fill="#e0d0a0" opacity="0.59"/>
 <rect x="172.7" y="135.7" width="1.3" height="0.8" fill="#e0d0a0" opacity="0.45"/>
 <rect x="107.1" y="132.8" width="1.2" height="1.0" fill="#a0a8c8" opacity="0.68"/>
 <rect x="79.4" y="136.5" width="1.0" height="1.1" fill="#c8c0a0" opacity="0.48"/>
 <rect x="90.5" y="110.5" width="0.9" height="1.2" fill="#a0a8c8" opacity="0.31"/>
 <rect x="81.4" y="116.0" width="1.2" height="1.0" fill="#a0a8c8" opacity="0.32"/>
 <rect x="187.3" y="121.4" width="0.9" height="1.2" fill="#a0a8c8" opacity="0.70"/>
 <rect x="84.6" y="129.7" width="1.4" height="1.2" fill="#c8c0a0" opacity="0.41"/>
 <rect x="199.4" y="133.1" width="1.3" height="0.7" fill="#a0a8c8" opacity="0.58"/>
 <rect x="179.0" y="112.4" width="1.0" height="0.8" fill="#e0d0a0" opacity="0.31"/>
 <rect x="117.7" y="137.2" width="1.2" height="1.1" fill="#a0a8c8" opacity="0.64"/>
 <rect x="149.6" y="117.7" width="1.4" height="0.9" fill="#e0d0a0" opacity="0.38"/>
 <rect x="76.2" y="77.8" width="1.3" height="1.2" fill="#c8c0a0" opacity="0.46"/>
 <rect x="88.4" y="116.2" width="1.4" height="1.2" fill="#a0a8c8" opacity="0.46"/>
 <rect x="103.9" y="116.6" width="1.1" height="0.7" fill="#a0a8c8" opacity="0.65"/>
 <rect x="139.7" y="139.3" width="1.2" height="0.7" fill="#e0d0a0" opacity="0.46"/>
 <rect x="193.2" y="101.1" width="1.1" height="1.1" fill="#c8c0a0" opacity="0.72"/>
 <rect x="92.5" y="108.3" width="1.3" height="1.0" fill="#c8c0a0" opacity="0.46"/>
 <rect x="185.6" y="113.6" width="1.3" height="0.7" fill="#e0d0a0" opacity="0.61"/>
 <rect x="119.4" y="112.1" width="1.3" height="0.9" fill="#e0d0a0" opacity="0.44"/>
 <rect x="167.4" y="127.8" width="0.9" height="0.7" fill="#c8c0a0" opacity="0.63"/>
 <rect x="106.7" y="136.6" width="1.0" height="1.2" fill="#c8c0a0" opacity="0.37"/>
 <rect x="191.1" y="98.2" width="0.8" height="1.1" fill="#e0d0a0" opacity="0.61"/>
 <rect x="141.1" y="111.3" width="1.1" height="0.7" fill="#a0a8c8" opacity="0.63"/>
 <rect x="76.7" y="80.9" width="1.4" height="1.0" fill="#a0a8c8" opacity="0.64"/>
 <rect x="169.9" y="130.6" width="1.3" height="1.0" fill="#c8c0a0" opacity="0.61"/>
 <rect x="116.7" y="111.0" width="0.9" height="0.9" fill="#e0d0a0" opacity="0.62"/>
 <rect x="163.8" y="134.6" width="0.9" height="1.0" fill="#c8c0a0" opacity="0.47"/>
 <rect x="139.7" y="138.0" width="0.8" height="0.9" fill="#c8c0a0" opacity="0.62"/>
 <rect x="233.8" y="95.2" width="1.2" height="1.4" fill="#ffc060" opacity="0.67"/>
 <rect x="227.9" y="106.4" width="1.6" height="1.3" fill="#fff0c0" opacity="0.61"/>
 <rect x="233.7" y="95.6" width="1.6" height="1.0" fill="#ffd27a" opacity="0.76"/>
 <rect x="225.4" y="111.0" width="1.1" height="0.9" fill="#ffd27a" opacity="0.41"/>
 <rect x="220.5" y="103.1" width="1.6" height="0.9" fill="#fff0c0" opacity="0.45"/>
 <rect x="217.6" y="102.4" width="1.9" height="1.5" fill="#ffc060" opacity="0.63"/>
 <rect x="214.1" y="121.5" width="0.9" height="1.3" fill="#ffb84a" opacity="0.63"/>
 <rect x="224.1" y="96.1" width="2.0" height="0.9" fill="#ffc060" opacity="0.63"/>
 <rect x="217.4" y="107.7" width="1.0" height="1.4" fill="#fff0c0" opacity="0.79"/>
 <rect x="215.8" y="113.4" width="1.6" height="1.5" fill="#ffb84a" opacity="0.64"/>
 <rect x="230.1" y="116.8" width="1.2" height="1.2" fill="#fff0c0" opacity="0.64"/>
 <rect x="220.7" y="110.9" width="1.6" height="0.9" fill="#fff0c0" opacity="0.83"/>
 <rect x="211.4" y="117.8" width="1.9" height="1.3" fill="#ffb84a" opacity="0.67"/>
 <rect x="218.6" y="109.0" width="1.6" height="0.8" fill="#ffd27a" opacity="0.73"/>
 <rect x="216.3" y="91.7" width="1.0" height="0.8" fill="#ffc060" opacity="0.57"/>
 <rect x="239.1" y="147.1" width="3.7" height="1.1" fill="#ffd080" opacity="0.73"/>
 <rect x="259.7" y="173.1" width="3.5" height="0.8" fill="#ffe8b0" opacity="0.51"/>
 <rect x="214.9" y="144.9" width="1.2" height="1.0" fill="#ffd080" opacity="0.64"/>
 <rect x="192.0" y="160.3" width="3.7" height="1.2" fill="#ffd080" opacity="0.65"/>
 <rect x="188.4" y="176.2" width="0.8" height="1.4" fill="#ffb040" opacity="0.75"/>
 <rect x="180.0" y="152.5" width="2.3" height="1.0" fill="#ffe8b0" opacity="0.44"/>
 <rect x="208.0" y="166.7" width="0.9" height="1.1" fill="#ffe8b0" opacity="0.77"/>
 <rect x="280.8" y="174.0" width="1.1" height="1.0" fill="#ffd080" opacity="0.42"/>
 <rect x="224.4" y="166.3" width="1.9" height="1.4" fill="#ffb040" opacity="0.57"/>
 <rect x="236.5" y="163.3" width="3.7" height="0.9" fill="#ffb040" opacity="0.61"/>
 <rect x="191.4" y="174.7" width="1.7" height="1.3" fill="#ffb040" opacity="0.57"/>
 <rect x="277.8" y="176.7" width="1.9" height="0.8" fill="#ffb040" opacity="0.80"/>
 <rect x="146.5" y="153.3" width="1.8" height="1.1" fill="#ffe8b0" opacity="0.44"/>
 <rect x="280.3" y="156.8" width="2.6" height="1.0" fill="#ffe8b0" opacity="0.42"/>
 <rect x="140.4" y="140.3" width="1.4" height="1.4" fill="#ffe8b0" opacity="0.78"/>
 <rect x="189.3" y="155.8" width="1.3" height="1.2" fill="#ffe8b0" opacity="0.70"/>
 <rect x="216.9" y="148.9" width="2.9" height="1.0" fill="#ffd080" opacity="0.45"/>
 <rect x="235.7" y="178.4" width="2.9" height="0.9" fill="#ffd080" opacity="0.79"/>
 <rect x="193.0" y="150.8" width="1.8" height="1.0" fill="#ffb040" opacity="0.41"/>
 <rect x="193.8" y="164.3" width="3.7" height="1.0" fill="#ffe8b0" opacity="0.42"/>
 <rect x="195.6" y="178.6" width="2.2" height="0.6" fill="#ffb040" opacity="0.70"/>
 <rect x="279.6" y="167.7" width="1.3" height="1.3" fill="#ffe8b0" opacity="0.45"/>
 <rect x="209.5" y="148.9" width="1.3" height="0.6" fill="#ffd080" opacity="0.40"/>
 <rect x="214.5" y="181.4" width="3.5" height="0.8" fill="#ffd080" opacity="0.46"/>
 <rect x="235.6" y="170.0" width="3.5" height="1.3" fill="#ffd080" opacity="0.55"/>
 <rect x="192.1" y="160.9" width="2.9" height="1.4" fill="#ffd080" opacity="0.76"/>
 <rect x="210.8" y="174.3" width="1.1" height="0.9" fill="#ffe8b0" opacity="0.70"/>
 <rect x="272.5" y="175.1" width="2.7" height="0.9" fill="#ffe8b0" opacity="0.76"/>
 <rect x="174.4" y="147.0" width="3.9" height="0.7" fill="#ffe8b0" opacity="0.48"/>
 <rect x="241.2" y="160.0" width="3.3" height="1.0" fill="#ffb040" opacity="0.79"/>
 <rect x="193.9" y="152.3" width="1.0" height="1.5" fill="#ffe8b0" opacity="0.80"/>
 <rect x="200.6" y="176.5" width="3.1" height="0.6" fill="#ffd080" opacity="0.70"/>
 <rect x="142.0" y="158.0" width="3.6" height="0.9" fill="#ffe8b0" opacity="0.59"/>
 <rect x="235.1" y="149.8" width="2.2" height="1.2" fill="#ffb040" opacity="0.53"/>
 <rect x="164.9" y="164.6" width="3.4" height="1.4" fill="#ffd080" opacity="0.54"/>
 <rect x="279.6" y="146.2" width="3.9" height="1.3" fill="#ffe8b0" opacity="0.74"/>
 <rect x="263.7" y="154.6" width="1.1" height="1.1" fill="#ffb040" opacity="0.50"/>
 <rect x="230.8" y="179.1" width="1.5" height="1.1" fill="#ffe8b0" opacity="0.60"/>
 <rect x="222.4" y="178.9" width="2.7" height="0.6" fill="#ffb040" opacity="0.63"/>
 <rect x="235.2" y="149.8" width="2.7" height="1.4" fill="#ffe8b0" opacity="0.56"/>
 <rect x="181.7" y="148.5" width="1.5" height="0.7" fill="#ffe8b0" opacity="0.54"/>
 <rect x="196.2" y="155.1" width="3.3" height="1.4" fill="#ffd080" opacity="0.42"/>
 <rect x="280.4" y="155.7" width="1.1" height="1.2" fill="#ffd080" opacity="0.48"/>
 <rect x="200.0" y="154.5" width="2.5" height="0.6" fill="#ffd080" opacity="0.50"/>
 <rect x="255.0" y="163.7" width="2.7" height="0.8" fill="#ffb040" opacity="0.61"/>
 <rect x="270.2" y="172.2" width="3.4" height="1.5" fill="#ffb040" opacity="0.82"/>
 <rect x="156.0" y="141.2" width="0.9" height="0.9" fill="#ffe8b0" opacity="0.63"/>
 <rect x="270.4" y="178.2" width="1.0" height="1.1" fill="#ffb040" opacity="0.86"/>
 <rect x="222.0" y="143.8" width="1.8" height="0.8" fill="#ffd080" opacity="0.88"/>
 <rect x="214.6" y="156.5" width="2.2" height="0.7" fill="#ffd080" opacity="0.90"/>
 <rect x="124.6" y="141.6" width="1.6" height="0.9" fill="#ffe8b0" opacity="0.85"/>
 <rect x="248.3" y="142.0" width="3.3" height="1.2" fill="#ffe8b0" opacity="0.78"/>
 <rect x="177.2" y="144.2" width="1.8" height="0.6" fill="#ffd080" opacity="0.74"/>
 <rect x="140.1" y="164.8" width="3.2" height="0.7" fill="#ffb040" opacity="0.59"/>
 <rect x="158.4" y="155.7" width="2.0" height="1.0" fill="#ffd080" opacity="0.86"/>
 <rect x="259.3" y="159.7" width="3.7" height="1.3" fill="#ffd080" opacity="0.86"/>
 <rect x="254.2" y="177.3" width="1.2" height="1.0" fill="#ffd080" opacity="0.86"/>
 <rect x="157.4" y="140.9" width="1.0" height="1.5" fill="#ffb040" opacity="0.81"/>
 <rect x="176.0" y="166.4" width="1.3" height="0.8" fill="#ffd080" opacity="0.49"/>
 <rect x="170.7" y="177.4" width="2.2" height="0.7" fill="#ffb040" opacity="0.61"/>
 <rect x="248.8" y="154.0" width="1.3" height="1.0" fill="#ffb040" opacity="0.63"/>
 <rect x="177.0" y="146.4" width="2.4" height="1.2" fill="#ffe8b0" opacity="0.86"/>
 <rect x="192.5" y="175.1" width="1.2" height="1.3" fill="#ffb040" opacity="0.62"/>
 <rect x="132.6" y="150.0" width="1.6" height="1.0" fill="#ffb040" opacity="0.85"/>
 <rect x="148.5" y="145.9" width="0.8" height="1.3" fill="#ffe8b0" opacity="0.54"/>
 <rect x="152.4" y="141.7" width="2.1" height="0.8" fill="#ffd080" opacity="0.47"/>
 <rect x="223.0" y="148.3" width="1.1" height="0.7" fill="#ffe8b0" opacity="0.77"/>
 <rect x="233.0" y="147.4" width="1.2" height="1.2" fill="#ffe8b0" opacity="0.81"/>
 <rect x="197.2" y="148.5" width="1.0" height="1.3" fill="#ffb040" opacity="0.82"/>
 <rect x="264.2" y="161.8" width="1.9" height="0.9" fill="#ffe8b0" opacity="0.83"/>
 <rect x="179.1" y="140.6" width="3.7" height="1.0" fill="#ffe8b0" opacity="0.53"/>
 <rect x="153.8" y="146.9" width="2.0" height="1.1" fill="#ffd080" opacity="0.58"/>
 <rect x="267.4" y="180.7" width="1.0" height="0.9" fill="#ffd080" opacity="0.81"/>
 <rect x="254.0" y="153.5" width="3.1" height="0.9" fill="#ffd080" opacity="0.55"/>
 <rect x="169.7" y="141.1" width="3.4" height="0.7" fill="#ffd080" opacity="0.88"/>
 <rect x="125.0" y="147.7" width="1.1" height="0.8" fill="#ffd080" opacity="0.41"/>
 <rect x="266.2" y="171.0" width="1.6" height="1.4" fill="#ffe8b0" opacity="0.69"/>
 <rect x="185.1" y="169.5" width="1.1" height="1.4" fill="#ffe8b0" opacity="0.49"/>
 <rect x="134.9" y="159.5" width="2.7" height="1.3" fill="#ffd080" opacity="0.46"/>
 <rect x="161.5" y="145.8" width="2.7" height="1.4" fill="#ffd080" opacity="0.73"/>
 <rect x="172.9" y="156.7" width="3.8" height="0.6" fill="#ffe8b0" opacity="0.59"/>
 <rect x="164.5" y="175.3" width="2.5" height="1.0" fill="#ffd080" opacity="0.79"/>
 <rect x="148.0" y="150.1" width="1.9" height="1.0" fill="#ffe8b0" opacity="0.80"/>
 <rect x="263.5" y="174.2" width="3.5" height="0.6" fill="#ffe8b0" opacity="0.47"/>
 <rect x="216.7" y="154.8" width="3.6" height="1.2" fill="#ffd080" opacity="0.58"/>
 <rect x="186.7" y="142.9" width="2.2" height="1.1" fill="#ffd080" opacity="0.51"/>
 <rect x="164.6" y="156.7" width="4.0" height="1.0" fill="#ffd080" opacity="0.80"/>
 <rect x="257.8" y="177.2" width="0.9" height="1.2" fill="#ffb040" opacity="0.86"/>
 <rect x="205.3" y="166.4" width="3.4" height="0.6" fill="#ffd080" opacity="0.53"/>
 <rect x="184.6" y="158.2" width="3.8" height="0.9" fill="#ffb040" opacity="0.57"/>
 <rect x="272.8" y="178.7" width="3.7" height="0.7" fill="#ffe8b0" opacity="0.67"/>
 <rect x="161.7" y="152.1" width="1.6" height="0.7" fill="#ffe8b0" opacity="0.54"/>
 <rect x="171.3" y="169.2" width="1.5" height="0.9" fill="#ffe8b0" opacity="0.76"/>
 <rect x="172.6" y="163.0" width="2.8" height="1.0" fill="#ffb040" opacity="0.42"/>
 <rect x="147.1" y="147.9" width="2.5" height="1.5" fill="#ffb040" opacity="0.41"/>
 <rect x="150.9" y="176.2" width="1.6" height="1.1" fill="#ffb040" opacity="0.53"/>
 <rect x="256.6" y="149.1" width="1.0" height="0.6" fill="#ffe8b0" opacity="0.43"/>
 <rect x="255.1" y="158.5" width="1.0" height="0.9" fill="#ffb040" opacity="0.58"/>
 <rect x="233.3" y="161.9" width="4.0" height="1.2" fill="#ffd080" opacity="0.61"/>
 <rect x="214.3" y="145.9" width="1.4" height="1.1" fill="#ffb040" opacity="0.81"/>
 <rect x="184.1" y="171.0" width="3.2" height="1.3" fill="#ffb040" opacity="0.53"/>
 <rect x="206.8" y="166.5" width="3.1" height="1.0" fill="#ffd080" opacity="0.40"/>
 <rect x="233.9" y="164.6" width="2.4" height="1.5" fill="#ffe8b0" opacity="0.47"/>
 <rect x="250.8" y="151.7" width="2.8" height="0.7" fill="#ffb040" opacity="0.75"/>
 <rect x="137.9" y="154.8" width="1.9" height="1.1" fill="#ffe8b0" opacity="0.59"/>
 <rect x="144.7" y="173.1" width="3.5" height="1.0" fill="#ffb040" opacity="0.55"/>
 <rect x="187.9" y="173.7" width="2.2" height="0.9" fill="#ffd080" opacity="0.44"/>
 <rect x="265.0" y="153.6" width="3.5" height="1.4" fill="#ffb040" opacity="0.50"/>
 <rect x="165.7" y="178.2" width="0.8" height="0.6" fill="#ffe8b0" opacity="0.85"/>
 <rect x="140.3" y="162.5" width="1.8" height="1.2" fill="#ffb040" opacity="0.66"/>
 <path d="M0 176 L24 166 L118 163 L165 187 L0 187Z" fill="#464654"/>
 <path d="M66 166 L110 166 L116 180 L72 180Z" fill="#3a3a48" stroke="#d0d0dc" stroke-width="2" opacity="0.8"/>
</svg></div>
<div class="a" style="left:1028px;top:654px;width:119px;height:115px;overflow:hidden"><svg class="a" style="left:0;top:0" width="119" height="115" viewBox="0 0 119 115">
 <defs><linearGradient id="bl" x1="0.2" y1="0" x2="0.5" y2="1"><stop offset="0" stop-color="#0c3fa8"/><stop offset="0.6" stop-color="#1a5cc4"/><stop offset="1" stop-color="#2a70d4"/></linearGradient>
 <linearGradient id="shaft" x1="0" y1="0" x2="1" y2="0"><stop offset="0" stop-color="#d8d8dc"/><stop offset="0.15" stop-color="#f6f6f6"/><stop offset="0.22" stop-color="#3a3a44"/><stop offset="0.38" stop-color="#44444c"/><stop offset="0.42" stop-color="#f0f0f2"/><stop offset="0.8" stop-color="#e8e8ea"/><stop offset="1" stop-color="#a8a8b0"/></linearGradient>
 <linearGradient id="sph" x1="0" y1="0" x2="0" y2="1"><stop offset="0" stop-color="#c8c0b0"/><stop offset="0.35" stop-color="#9a9080"/><stop offset="0.42" stop-color="#5a5248"/><stop offset="0.55" stop-color="#6a6258"/><stop offset="0.62" stop-color="#e0d8c8"/><stop offset="0.7" stop-color="#3e3830"/><stop offset="0.9" stop-color="#5a5248"/><stop offset="1" stop-color="#8a8070"/></linearGradient></defs>
 <rect width="119" height="115" fill="url(#bl)"/>
 <path d="M100 48 Q108 42 116 32" stroke="#c8dcf8" stroke-width="2.5" fill="none" opacity="0.55"/>
 <path d="M92 62 Q100 58 104 50" stroke="#a8c4f0" stroke-width="2" fill="none" opacity="0.4"/>
 <path d="M41 93 Q50 90 54 80" stroke="#dce8fc" stroke-width="3" fill="none" opacity="0.6"/>
 <path d="M0 10 Q4 15 3 22" stroke="#9ab8ec" stroke-width="2" fill="none" opacity="0.35"/>
 <rect x="56" y="64" width="20.5" height="51" fill="url(#shaft)"/>
 <ellipse cx="64.3" cy="49" rx="19.3" ry="16.5" fill="url(#sph)"/>
 <path d="M46 45 Q64 36 82.5 45" stroke="#d8d0c0" stroke-width="1.5" fill="none" opacity="0.8"/>
</svg></div>
<div class="a" style="left:1150px;top:654px;width:159px;height:115px;overflow:hidden"><svg class="a" style="left:0;top:0" width="159" height="115" viewBox="0 0 159 115">
 <defs><linearGradient id="cy" x1="0" y1="0" x2="0.3" y2="1"><stop offset="0" stop-color="#1496d6"/><stop offset="0.6" stop-color="#22aae4"/><stop offset="1" stop-color="#48bce8"/></linearGradient>
 <linearGradient id="plz" x1="0" y1="0" x2="0" y2="1"><stop offset="0" stop-color="#a8a69a"/><stop offset="1" stop-color="#bcbaae"/></linearGradient></defs>
 <rect width="159" height="115" fill="url(#cy)"/>
 <path d="M120 0 Q140 20 159 30 L159 0Z" fill="#5ac8f0" opacity="0.12"/>
 <rect x="0" y="72" width="159" height="43" fill="url(#plz)"/>
 <rect x="0" y="61" width="55" height="12" fill="#c8a068"/><rect x="104" y="61" width="55" height="12" fill="#c8a068"/>
 <path d="M0 61.5 H55 M104 61.5 H159" stroke="#e0c890" stroke-width="1.5"/>
 <path d="M3 63 v9 M8 63 v9 M13 63 v9 M18 63 v9 M141 63 v9 M146 63 v9 M151 63 v9 M156 63 v9" stroke="#6a5030" stroke-width="1"/>
 <rect x="50" y="64" width="60" height="9" fill="#a88a68"/>
 <rect x="54.5" y="43.6" width="49.5" height="22" fill="#c4a470"/>
 <rect x="54.5" y="43.6" width="49.5" height="4.5" fill="#d8bc88"/>
 <path d="M57.5 49 v16 M61 49 v16 M64.5 49 v16 M68 49 v16 M71.5 49 v16 M88 49 v16 M91.5 49 v16 M95 49 v16 M98.5 49 v16 M102 49 v16" stroke="#2e2418" stroke-width="1.5"/>
 <rect x="74" y="49" width="12" height="13" fill="#d83028"/><circle cx="80" cy="55" r="2" fill="#fff" opacity="0.7"/>
 <rect x="23.2" y="72.6" width="1.2" height="1.7" fill="#d83a3a"/>
 <rect x="77.3" y="70.2" width="1.2" height="2.0" fill="#f0f0f0"/>
 <rect x="131.5" y="69.6" width="1.2" height="2.8" fill="#30303a"/>
 <rect x="74.3" y="73.3" width="1.2" height="2.9" fill="#e86060"/>
 <rect x="85.2" y="71.6" width="1.2" height="2.9" fill="#c02828"/>
 <rect x="40.2" y="73.5" width="1.2" height="2.4" fill="#f0f0f0"/>
 <rect x="34.7" y="74.2" width="1.2" height="2.5" fill="#f0f0f0"/>
 <rect x="63.6" y="73.6" width="1.2" height="2.7" fill="#f0f0f0"/>
 <rect x="42.3" y="71.5" width="1.2" height="2.2" fill="#d83a3a"/>
 <rect x="68.4" y="73.8" width="1.2" height="2.0" fill="#e86060"/>
 <rect x="100.5" y="73.4" width="1.2" height="2.4" fill="#30303a"/>
 <rect x="96.8" y="73.6" width="1.2" height="1.8" fill="#e86060"/>
 <rect x="76.2" y="67.4" width="1.2" height="1.7" fill="#30303a"/>
 <rect x="68.7" y="69.4" width="1.2" height="1.9" fill="#e86060"/>
 <rect x="88.2" y="69.3" width="1.2" height="2.6" fill="#d83a3a"/>
 <rect x="114.5" y="70.0" width="1.2" height="2.4" fill="#30303a"/>
 <rect x="76.4" y="70.1" width="1.2" height="2.9" fill="#c02828"/>
 <rect x="87.8" y="70.1" width="1.2" height="2.2" fill="#f0f0f0"/>
 <rect x="139.4" y="74.4" width="1.2" height="2.7" fill="#30303a"/>
 <rect x="34.1" y="67.1" width="1.2" height="2.0" fill="#c02828"/>
 <rect x="82.5" y="70.2" width="1.2" height="2.0" fill="#d83a3a"/>
 <rect x="26.6" y="73.3" width="1.2" height="2.6" fill="#30303a"/>
 <rect x="91.7" y="73.5" width="1.2" height="2.8" fill="#f0f0f0"/>
 <rect x="125.2" y="68.4" width="1.2" height="1.9" fill="#30303a"/>
 <rect x="124.8" y="75.7" width="1.2" height="2.5" fill="#30303a"/>
 <rect x="83.1" y="68.4" width="1.2" height="2.5" fill="#f0f0f0"/>
 <rect x="132.8" y="74.8" width="1.2" height="2.8" fill="#f0f0f0"/>
 <rect x="70.6" y="74.1" width="1.2" height="2.5" fill="#e86060"/>
 <rect x="70.6" y="67.2" width="1.2" height="1.6" fill="#d83a3a"/>
 <rect x="115.1" y="67.2" width="1.2" height="2.4" fill="#c02828"/>
 <rect x="74.4" y="69.0" width="1.2" height="1.5" fill="#f0f0f0"/>
 <rect x="40.6" y="70.4" width="1.2" height="2.7" fill="#30303a"/>
 <rect x="67.7" y="69.6" width="1.2" height="1.8" fill="#c02828"/>
 <rect x="56.7" y="70.5" width="1.2" height="2.0" fill="#f0f0f0"/>
 <rect x="79.8" y="75.3" width="1.2" height="2.8" fill="#30303a"/>
 <rect x="44.3" y="74.6" width="1.2" height="1.8" fill="#d83a3a"/>
 <rect x="120.6" y="69.5" width="1.2" height="1.5" fill="#30303a"/>
 <rect x="96.2" y="73.0" width="1.2" height="1.8" fill="#c02828"/>
 <rect x="95.9" y="67.9" width="1.2" height="2.5" fill="#d83a3a"/>
 <rect x="56.7" y="74.2" width="1.2" height="2.8" fill="#f0f0f0"/>
 <rect x="105.6" y="67.3" width="1.2" height="2.1" fill="#30303a"/>
 <rect x="40.3" y="74.6" width="1.2" height="2.6" fill="#d83a3a"/>
 <rect x="43.6" y="67.8" width="1.2" height="2.3" fill="#e86060"/>
 <rect x="55.5" y="68.7" width="1.2" height="2.8" fill="#c02828"/>
 <rect x="90.8" y="68.3" width="1.2" height="2.8" fill="#f0f0f0"/>
 <path d="M76 76 L40 115 M86 76 L120 115 M72 76 L0 108 M90 76 L159 106 M66 76 L0 90 M96 76 L159 90 M79 76 L62 115 M83 76 L98 115" stroke="#5a6a98" stroke-width="1.3" opacity="0.7"/>
 <rect x="71.9" y="96.5" width="4.4" height="1.1" fill="#50608a" opacity="0.64"/>
 <rect x="30.2" y="106.8" width="3.4" height="1.2" fill="#6a7090" opacity="0.34"/>
 <rect x="48.2" y="76.8" width="2.4" height="1.3" fill="#e8e6dc" opacity="0.54"/>
 <rect x="63.0" y="92.0" width="3.4" height="1.3" fill="#50608a" opacity="0.31"/>
 <rect x="84.0" y="75.5" width="1.0" height="0.8" fill="#e8e6dc" opacity="0.61"/>
 <rect x="51.9" y="97.8" width="1.9" height="0.8" fill="#8a8a88" opacity="0.50"/>
 <rect x="105.3" y="92.2" width="1.9" height="1.6" fill="#e8e6dc" opacity="0.58"/>
 <rect x="50.1" y="82.6" width="1.5" height="0.7" fill="#e8e6dc" opacity="0.46"/>
 <rect x="134.6" y="89.2" width="3.8" height="1.4" fill="#e8e6dc" opacity="0.39"/>
 <rect x="147.4" y="75.2" width="1.4" height="1.3" fill="#f4f2ea" opacity="0.33"/>
 <rect x="100.1" y="105.7" width="2.5" height="0.7" fill="#8a8a88" opacity="0.31"/>
 <rect x="65.2" y="111.8" width="2.1" height="1.3" fill="#e8e6dc" opacity="0.32"/>
 <rect x="126.7" y="80.5" width="2.1" height="1.0" fill="#6a7090" opacity="0.69"/>
 <rect x="122.4" y="90.6" width="2.2" height="1.0" fill="#6a7090" opacity="0.30"/>
 <rect x="137.4" y="113.9" width="4.4" height="1.6" fill="#e8e6dc" opacity="0.38"/>
 <rect x="62.7" y="108.9" width="4.3" height="0.7" fill="#6a7090" opacity="0.39"/>
 <rect x="41.1" y="105.5" width="2.7" height="0.9" fill="#e8e6dc" opacity="0.33"/>
 <rect x="33.2" y="99.7" width="1.3" height="1.0" fill="#50608a" opacity="0.48"/>
 <rect x="152.5" y="93.3" width="3.0" height="1.5" fill="#6a7090" opacity="0.55"/>
 <rect x="49.4" y="82.6" width="2.3" height="1.3" fill="#6a7090" opacity="0.60"/>
 <rect x="149.5" y="81.3" width="3.1" height="1.5" fill="#50608a" opacity="0.33"/>
 <rect x="7.5" y="77.6" width="1.8" height="0.9" fill="#f4f2ea" opacity="0.40"/>
 <rect x="131.0" y="98.1" width="2.2" height="0.8" fill="#e8e6dc" opacity="0.35"/>
 <rect x="76.2" y="100.4" width="3.6" height="0.7" fill="#6a7090" opacity="0.67"/>
 <rect x="32.4" y="73.7" width="1.1" height="1.0" fill="#e8e6dc" opacity="0.32"/>
 <rect x="44.8" y="95.3" width="4.4" height="0.7" fill="#6a7090" opacity="0.66"/>
 <rect x="155.9" y="100.6" width="3.9" height="1.2" fill="#6a7090" opacity="0.54"/>
 <rect x="146.9" y="92.9" width="2.2" height="0.9" fill="#e8e6dc" opacity="0.31"/>
 <rect x="101.2" y="93.3" width="3.5" height="0.9" fill="#e8e6dc" opacity="0.33"/>
 <rect x="86.8" y="104.0" width="4.9" height="1.3" fill="#6a7090" opacity="0.62"/>
 <rect x="145.5" y="87.8" width="2.9" height="1.5" fill="#f4f2ea" opacity="0.68"/>
 <rect x="4.8" y="94.0" width="1.1" height="1.3" fill="#f4f2ea" opacity="0.53"/>
 <rect x="96.8" y="76.4" width="2.0" height="1.6" fill="#f4f2ea" opacity="0.59"/>
 <rect x="61.8" y="103.9" width="3.7" height="1.0" fill="#50608a" opacity="0.33"/>
 <rect x="119.3" y="74.3" width="1.8" height="1.1" fill="#6a7090" opacity="0.68"/>
 <rect x="17.9" y="105.8" width="4.1" height="1.1" fill="#e8e6dc" opacity="0.45"/>
 <rect x="22.8" y="98.7" width="3.1" height="1.4" fill="#8a8a88" opacity="0.56"/>
 <rect x="70.3" y="110.5" width="3.0" height="1.3" fill="#6a7090" opacity="0.55"/>
 <rect x="127.8" y="104.7" width="2.2" height="0.8" fill="#6a7090" opacity="0.53"/>
 <rect x="50.3" y="78.7" width="1.8" height="1.4" fill="#e8e6dc" opacity="0.58"/>
 <rect x="151.1" y="84.6" width="1.3" height="1.1" fill="#8a8a88" opacity="0.67"/>
 <rect x="132.1" y="89.1" width="2.5" height="1.3" fill="#50608a" opacity="0.48"/>
 <rect x="11.9" y="74.3" width="2.3" height="0.6" fill="#8a8a88" opacity="0.53"/>
 <rect x="49.1" y="106.2" width="1.5" height="0.7" fill="#f4f2ea" opacity="0.38"/>
 <rect x="122.3" y="84.2" width="2.9" height="1.4" fill="#e8e6dc" opacity="0.48"/>
 <rect x="100.2" y="100.5" width="4.3" height="1.6" fill="#6a7090" opacity="0.38"/>
 <rect x="75.5" y="80.5" width="0.8" height="1.1" fill="#e8e6dc" opacity="0.37"/>
 <rect x="43.3" y="87.5" width="2.9" height="1.1" fill="#50608a" opacity="0.70"/>
 <rect x="25.3" y="108.6" width="4.5" height="0.8" fill="#f4f2ea" opacity="0.67"/>
 <rect x="114.9" y="78.5" width="1.7" height="1.2" fill="#e8e6dc" opacity="0.45"/>
 <rect x="90.4" y="109.9" width="5.0" height="1.5" fill="#f4f2ea" opacity="0.43"/>
 <rect x="156.2" y="77.2" width="2.5" height="1.4" fill="#e8e6dc" opacity="0.39"/>
 <rect x="143.1" y="114.2" width="6.2" height="1.1" fill="#8a8a88" opacity="0.40"/>
 <rect x="114.2" y="73.7" width="1.5" height="0.6" fill="#8a8a88" opacity="0.52"/>
 <rect x="122.1" y="93.5" width="1.2" height="1.4" fill="#e8e6dc" opacity="0.47"/>
 <rect x="5.6" y="95.4" width="3.5" height="1.5" fill="#f4f2ea" opacity="0.36"/>
 <rect x="82.1" y="103.4" width="4.7" height="1.3" fill="#f4f2ea" opacity="0.53"/>
 <rect x="109.6" y="104.8" width="3.1" height="1.2" fill="#50608a" opacity="0.56"/>
 <rect x="83.1" y="108.4" width="3.9" height="0.9" fill="#f4f2ea" opacity="0.68"/>
 <rect x="138.3" y="98.6" width="2.3" height="0.7" fill="#50608a" opacity="0.51"/>
 <rect x="91.1" y="81.4" width="2.1" height="1.1" fill="#50608a" opacity="0.45"/>
 <rect x="85.6" y="74.8" width="2.4" height="1.1" fill="#50608a" opacity="0.35"/>
 <rect x="14.8" y="80.0" width="2.9" height="1.1" fill="#f4f2ea" opacity="0.41"/>
 <rect x="75.2" y="78.3" width="1.7" height="1.4" fill="#f4f2ea" opacity="0.51"/>
 <rect x="17.3" y="90.6" width="1.1" height="0.9" fill="#e8e6dc" opacity="0.31"/>
 <rect x="24.7" y="73.5" width="1.1" height="1.3" fill="#6a7090" opacity="0.55"/>
 <rect x="16.7" y="103.7" width="1.8" height="1.1" fill="#8a8a88" opacity="0.59"/>
 <rect x="111.5" y="109.9" width="1.6" height="1.2" fill="#50608a" opacity="0.55"/>
 <rect x="85.6" y="109.3" width="3.8" height="0.8" fill="#6a7090" opacity="0.64"/>
 <rect x="97.3" y="109.0" width="2.5" height="1.3" fill="#8a8a88" opacity="0.66"/>
 <rect x="50.2" y="86.2" width="3.4" height="0.8" fill="#6a7090" opacity="0.66"/>
 <rect x="21.3" y="83.1" width="2.7" height="0.9" fill="#e8e6dc" opacity="0.47"/>
 <rect x="149.6" y="95.8" width="3.6" height="0.8" fill="#e8e6dc" opacity="0.34"/>
 <rect x="90.6" y="88.0" width="3.3" height="1.0" fill="#50608a" opacity="0.55"/>
 <rect x="54.6" y="114.9" width="5.6" height="1.4" fill="#f4f2ea" opacity="0.34"/>
 <rect x="6.0" y="96.2" width="2.9" height="1.2" fill="#6a7090" opacity="0.38"/>
 <rect x="18.3" y="80.2" width="1.1" height="0.9" fill="#e8e6dc" opacity="0.53"/>
 <rect x="21.4" y="101.6" width="1.6" height="0.7" fill="#f4f2ea" opacity="0.49"/>
 <rect x="81.9" y="91.1" width="2.9" height="0.6" fill="#e8e6dc" opacity="0.64"/>
 <rect x="28.8" y="92.1" width="3.4" height="1.0" fill="#6a7090" opacity="0.54"/>
 <rect x="15.1" y="106.3" width="2.7" height="0.7" fill="#f4f2ea" opacity="0.53"/>
 <rect x="30.4" y="97.6" width="2.4" height="1.4" fill="#8a8a88" opacity="0.66"/>
 <rect x="118.4" y="105.7" width="4.7" height="1.0" fill="#8a8a88" opacity="0.65"/>
 <rect x="110.5" y="105.2" width="4.5" height="1.0" fill="#6a7090" opacity="0.33"/>
 <rect x="54.3" y="92.7" width="1.1" height="1.0" fill="#50608a" opacity="0.32"/>
 <rect x="43.4" y="113.4" width="3.0" height="0.8" fill="#f4f2ea" opacity="0.53"/>
 <rect x="84.8" y="89.4" width="4.0" height="1.2" fill="#e8e6dc" opacity="0.60"/>
 <rect x="155.8" y="74.0" width="1.8" height="1.3" fill="#8a8a88" opacity="0.48"/>
 <rect x="80.3" y="105.0" width="4.0" height="0.6" fill="#8a8a88" opacity="0.40"/>
 <rect x="144.0" y="96.1" width="2.9" height="1.6" fill="#50608a" opacity="0.64"/>
 <rect x="15.8" y="91.7" width="3.1" height="1.1" fill="#e8e6dc" opacity="0.45"/>
 <rect x="149.2" y="89.2" width="3.9" height="1.5" fill="#50608a" opacity="0.54"/>
 <rect x="9.3" y="112.7" width="3.5" height="1.1" fill="#50608a" opacity="0.42"/>
 <rect x="84.3" y="93.3" width="2.0" height="1.5" fill="#8a8a88" opacity="0.31"/>
 <rect x="122.8" y="97.6" width="3.4" height="1.0" fill="#f4f2ea" opacity="0.32"/>
 <rect x="50.1" y="89.7" width="2.7" height="1.3" fill="#8a8a88" opacity="0.33"/>
 <rect x="144.0" y="91.0" width="2.5" height="1.6" fill="#6a7090" opacity="0.32"/>
 <rect x="15.7" y="107.0" width="5.3" height="0.7" fill="#6a7090" opacity="0.54"/>
 <rect x="18.3" y="99.2" width="2.9" height="0.8" fill="#e8e6dc" opacity="0.44"/>
 <rect x="24.6" y="88.3" width="1.4" height="1.0" fill="#50608a" opacity="0.40"/>
 <rect x="92.6" y="90.6" width="3.4" height="1.1" fill="#6a7090" opacity="0.68"/>
 <rect x="116.8" y="83.0" width="1.1" height="1.5" fill="#50608a" opacity="0.55"/>
 <rect x="57.1" y="84.4" width="2.7" height="1.2" fill="#50608a" opacity="0.38"/>
 <rect x="44.3" y="83.1" width="3.2" height="1.1" fill="#6a7090" opacity="0.65"/>
 <rect x="6.3" y="75.6" width="1.2" height="1.0" fill="#50608a" opacity="0.32"/>
 <rect x="35.4" y="84.7" width="2.9" height="1.5" fill="#6a7090" opacity="0.52"/>
 <rect x="100.3" y="88.7" width="2.4" height="0.8" fill="#8a8a88" opacity="0.50"/>
 <rect x="21.2" y="109.5" width="5.0" height="1.0" fill="#50608a" opacity="0.64"/>
 <rect x="122.3" y="91.7" width="3.4" height="1.0" fill="#6a7090" opacity="0.45"/>
 <rect x="103.9" y="114.5" width="3.1" height="1.1" fill="#6a7090" opacity="0.47"/>
 <rect x="58.7" y="77.1" width="2.5" height="0.7" fill="#e8e6dc" opacity="0.47"/>
 <rect x="90.3" y="107.2" width="3.4" height="1.4" fill="#e8e6dc" opacity="0.33"/>
 <rect x="33.9" y="100.8" width="1.6" height="0.9" fill="#8a8a88" opacity="0.41"/>
 <rect x="22.7" y="88.0" width="3.0" height="1.0" fill="#e8e6dc" opacity="0.43"/>
 <rect x="70.1" y="98.0" width="4.4" height="1.3" fill="#8a8a88" opacity="0.48"/>
 <rect x="127.7" y="85.8" width="1.8" height="1.0" fill="#50608a" opacity="0.40"/>
 <rect x="57.5" y="88.4" width="2.0" height="1.0" fill="#f4f2ea" opacity="0.62"/>
 <rect x="117.5" y="88.5" width="2.1" height="0.8" fill="#50608a" opacity="0.53"/>
 <rect x="28.1" y="104.9" width="5.0" height="0.9" fill="#e8e6dc" opacity="0.39"/>
 <rect x="9.2" y="79.7" width="1.4" height="0.6" fill="#f4f2ea" opacity="0.33"/>
 <rect x="86.9" y="106.1" width="1.7" height="0.7" fill="#e8e6dc" opacity="0.66"/>
 <rect x="13.5" y="99.6" width="1.8" height="1.3" fill="#f4f2ea" opacity="0.40"/>
 <rect x="35.1" y="105.1" width="3.5" height="1.4" fill="#f4f2ea" opacity="0.44"/>
 <rect x="128.4" y="87.0" width="1.3" height="1.1" fill="#e8e6dc" opacity="0.58"/>
 <rect x="145.5" y="90.2" width="3.5" height="1.3" fill="#e8e6dc" opacity="0.62"/>
 <rect x="132.6" y="110.3" width="5.8" height="1.2" fill="#50608a" opacity="0.44"/>
 <rect x="1.6" y="77.6" width="2.7" height="1.5" fill="#6a7090" opacity="0.60"/>
 <rect x="157.6" y="88.8" width="1.5" height="0.8" fill="#f4f2ea" opacity="0.51"/>
 <rect x="43.6" y="110.2" width="3.6" height="1.3" fill="#8a8a88" opacity="0.56"/>
 <rect x="123.4" y="80.5" width="0.9" height="1.1" fill="#50608a" opacity="0.49"/>
 <rect x="127.3" y="86.1" width="1.5" height="1.0" fill="#50608a" opacity="0.39"/>
 <rect x="114.0" y="98.0" width="2.0" height="0.8" fill="#8a8a88" opacity="0.46"/>
 <rect x="144.8" y="112.4" width="4.4" height="1.5" fill="#50608a" opacity="0.49"/>
 <rect x="41.4" y="110.3" width="5.6" height="0.9" fill="#50608a" opacity="0.61"/>
 <rect x="14.7" y="109.2" width="3.2" height="0.8" fill="#6a7090" opacity="0.62"/>
 <rect x="61.2" y="95.2" width="2.9" height="0.9" fill="#e8e6dc" opacity="0.56"/>
 <rect x="37.8" y="73.5" width="1.5" height="1.0" fill="#6a7090" opacity="0.59"/>
 <rect x="96.4" y="79.6" width="1.1" height="0.9" fill="#8a8a88" opacity="0.66"/>
 <rect x="128.8" y="78.5" width="2.4" height="1.2" fill="#50608a" opacity="0.51"/>
 <rect x="24.0" y="105.4" width="1.4" height="1.4" fill="#6a7090" opacity="0.63"/>
 <rect x="13.1" y="84.3" width="2.7" height="0.7" fill="#f4f2ea" opacity="0.58"/>
 <rect x="13.2" y="104.4" width="3.5" height="1.1" fill="#e8e6dc" opacity="0.62"/>
 <rect x="66.3" y="111.5" width="1.9" height="1.4" fill="#6a7090" opacity="0.31"/>
 <rect x="65.7" y="93.8" width="4.2" height="1.6" fill="#8a8a88" opacity="0.42"/>
 <rect x="12.1" y="85.8" width="2.2" height="1.3" fill="#8a8a88" opacity="0.33"/>
 <rect x="22.3" y="101.0" width="3.8" height="1.3" fill="#e8e6dc" opacity="0.56"/>
 <rect x="2.0" y="88.8" width="3.1" height="0.8" fill="#50608a" opacity="0.35"/>
 <rect x="122.7" y="109.0" width="5.1" height="1.3" fill="#50608a" opacity="0.36"/>
 <rect x="99.8" y="112.4" width="5.0" height="1.6" fill="#f4f2ea" opacity="0.52"/>
 <rect x="13.8" y="80.9" width="1.7" height="0.7" fill="#8a8a88" opacity="0.68"/>
 <rect x="89.5" y="103.4" width="2.6" height="1.4" fill="#e8e6dc" opacity="0.34"/>
 <rect x="98.9" y="78.5" width="2.1" height="0.8" fill="#6a7090" opacity="0.46"/>
 <rect x="133.1" y="97.9" width="1.5" height="0.8" fill="#6a7090" opacity="0.69"/>
 <rect x="69.0" y="105.4" width="2.8" height="1.4" fill="#50608a" opacity="0.36"/>
 <rect x="32.7" y="79.2" width="2.3" height="1.1" fill="#f4f2ea" opacity="0.55"/>
 <rect x="115.6" y="98.7" width="2.4" height="1.4" fill="#6a7090" opacity="0.56"/>
 <rect x="96.8" y="73.8" width="1.2" height="0.9" fill="#f4f2ea" opacity="0.34"/>
 <rect x="60.0" y="94.4" width="3.7" height="1.4" fill="#50608a" opacity="0.59"/>
 <rect x="40.4" y="95.6" width="2.2" height="0.8" fill="#50608a" opacity="0.50"/>
 <rect x="22.5" y="103.0" width="5.2" height="1.1" fill="#6a7090" opacity="0.53"/>
 <path d="M77.5 80 V115 M83.5 80 V115" stroke="#2a4aa8" stroke-width="1.6"/>
 <path d="M80.5 80 V115" stroke="#f0eee0" stroke-width="1.5"/>
 <rect x="130" y="74" width="2.5" height="7" fill="#607090"/>
</svg></div>

<!-- main scrollbars -->
<div class="a" style="left:1390px;top:112px;width:20px;height:657px;background:#f1f1f1"></div>
<svg class="a" style="left:1395px;top:119px" width="10" height="6"><path d="M0.5 5.5 L5 0.5 L9.5 5.5Z" fill="#a3a3a3"/></svg>
<div class="a" style="left:1392px;top:132px;width:17px;height:24px;background:#c1c1c1"></div>
<svg class="a" style="left:1396px;top:754px" width="10" height="6"><path d="M0.5 0.5 L9.5 0.5 L5 5.5Z" fill="#505050"/></svg>
<div class="a" style="left:61px;top:769px;width:1329px;height:21px;background:#f1f1f1"></div>
<div class="a" style="left:1390px;top:769px;width:20px;height:21px;background:#dcdcdc"></div>
<div class="a" style="left:82px;top:771px;width:1089px;height:17px;background:#c1c1c1"></div>
<svg class="a" style="left:69px;top:775px" width="6" height="10"><path d="M5.5 0.5 V9.5 L0.5 5Z" fill="#a3a3a3"/></svg>
<svg class="a" style="left:1377px;top:775px" width="6" height="10"><path d="M0.5 0.5 V9.5 L5.5 5Z" fill="#505050"/></svg>

<!-- dropdown -->
<div class="a" style="left:61px;top:109px;width:349px;height:166px;background:#f0f0f0;border:1px solid #c6c6c6"></div>
<div class="a" style="left:62px;top:236px;width:347px;height:1px;background:#cdcdcd"></div>
<!-- dropdown items -->
<div class="a" style="left:79px;top:118px;width:20px;height:20px;border-radius:3px;background:#fff"></div>
<svg class="a" style="left:80px;top:123px" width="18" height="11.6" viewBox="0 0 18 11.6"><path d="M1.6 0.6 L5.6 11.3 M5.6 11.3 L9.6 0.6 M6.6 0.6 L10.9 11.3 M10.9 11.3 L15.7 0.6" stroke="#111" fill="none" stroke-width="1"/><path d="M1.6 0.6 L5.6 11.3 M6.6 0.6 L10.9 11.3" stroke="#111" fill="none" stroke-width="1.8"/><path d="M0 0.6 H4.2 M5.2 0.6 H8.2 M8.4 0.6 H11.6 M13.6 0.6 H18" stroke="#111" stroke-width="1"/></svg>
<div class="t ui" style="left:105px;top:121px;font-size:16px">Türkiye - Vikipedi</div>
<div class="a" style="left:79px;top:148px;width:20px;height:20px;border-radius:3px;background:#fff"></div>
<svg class="a" style="left:80px;top:153px" width="18" height="11.6" viewBox="0 0 18 11.6"><path d="M1.6 0.6 L5.6 11.3 M5.6 11.3 L9.6 0.6 M6.6 0.6 L10.9 11.3 M10.9 11.3 L15.7 0.6" stroke="#111" fill="none" stroke-width="1"/><path d="M1.6 0.6 L5.6 11.3 M6.6 0.6 L10.9 11.3" stroke="#111" fill="none" stroke-width="1.8"/><path d="M0 0.6 H4.2 M5.2 0.6 H8.2 M8.4 0.6 H11.6 M13.6 0.6 H18" stroke="#111" stroke-width="1"/></svg>
<div class="t ui" style="left:105px;top:151px;font-size:16px">İstanbul - Vikipedi</div>
<svg class="a" style="left:79px;top:178px" width="20" height="20"><circle cx="10.1" cy="10" r="10.1" fill="#fc3f1d"/><path d="M6.6 4.4 L10.1 11.2 V16.6 M14.4 4.4 L11.9 9.8" stroke="#fff" stroke-width="2.3" fill="none"/></svg>
<div class="t ui" style="left:105px;top:181px;font-size:16px">Istanbul — Yandex: 4 bin sonuç bulundu</div>
<svg class="a" style="left:79px;top:208px" width="20" height="20"><circle cx="10.1" cy="10" r="10.1" fill="#fc3f1d"/><path d="M6.6 4.4 L10.1 11.2 V16.6 M14.4 4.4 L11.9 9.8" stroke="#fff" stroke-width="2.3" fill="none"/></svg>
<div class="t ui" style="left:105px;top:211px;font-size:16px">Yandex</div>
<svg class="a" style="left:81px;top:247px" width="17" height="17"><circle cx="8.5" cy="8.5" r="8.3" fill="#2b2b2b"/><path d="M8.5 4 V9 H12.5" stroke="#fff" stroke-width="1.8" fill="none"/></svg>
<div class="t ui" style="left:105px;top:248px;font-size:16px;letter-spacing:-0.33px">Tam Geçmişi Göster</div>


</body></html>
